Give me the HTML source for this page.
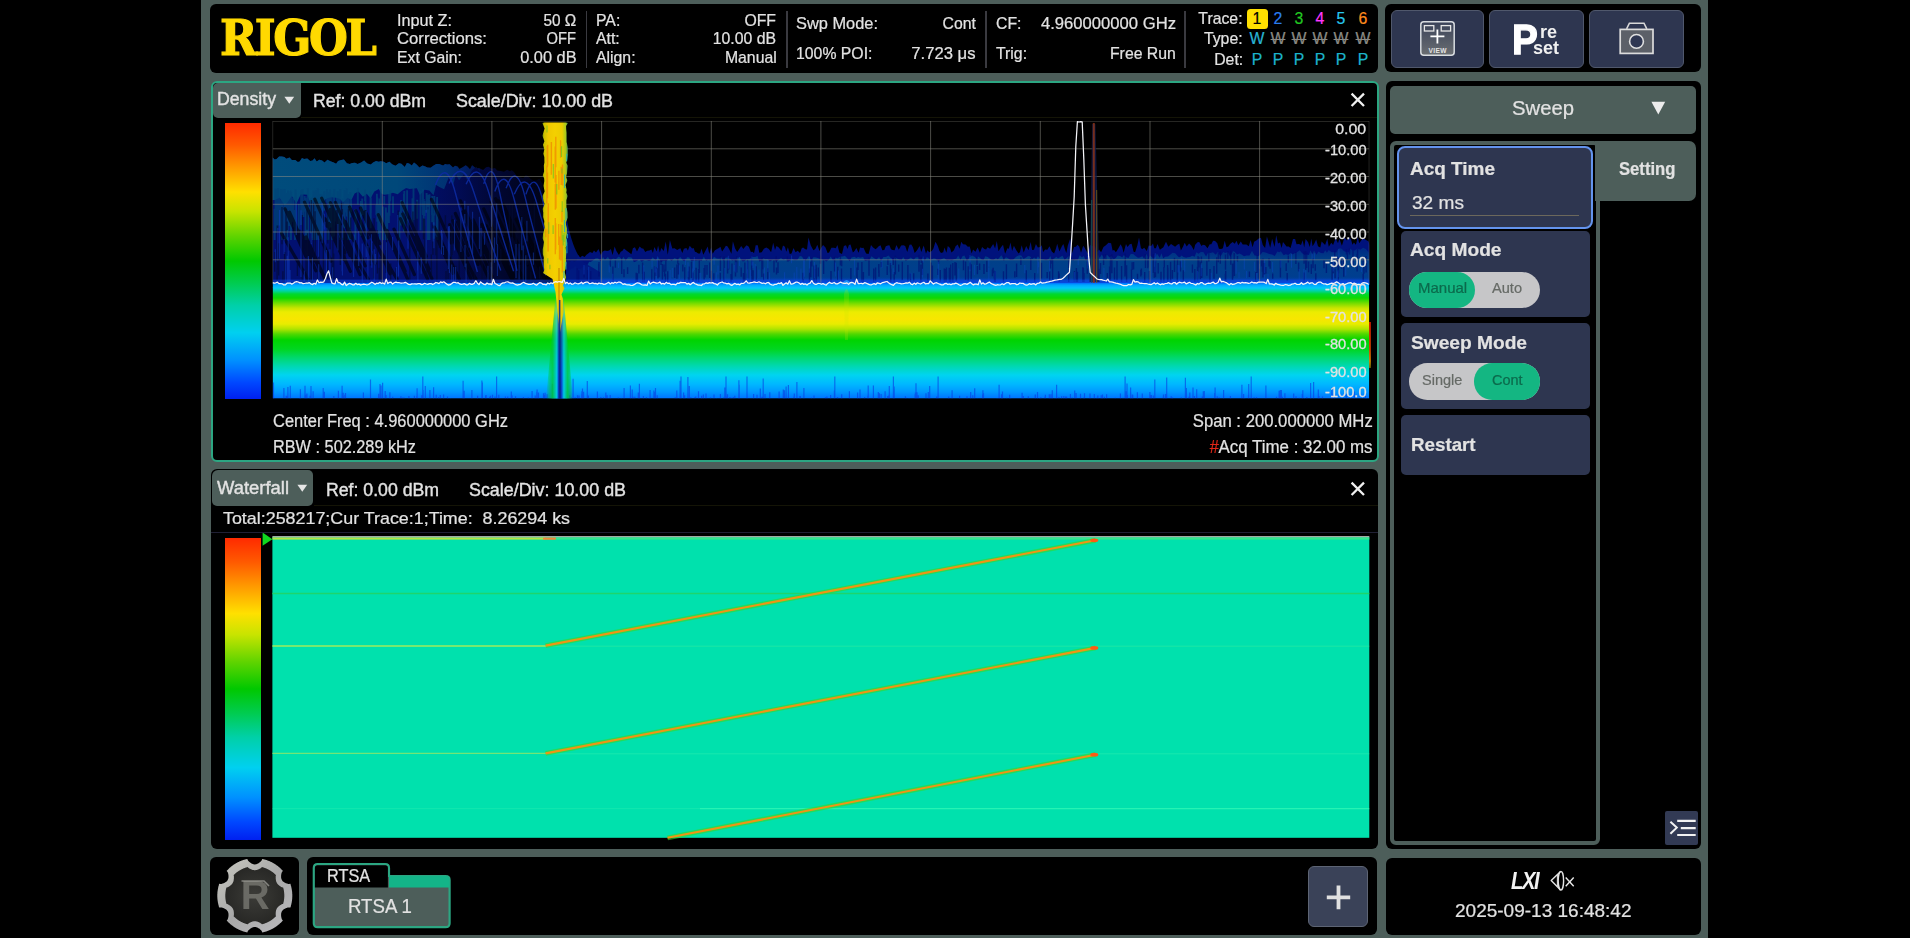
<!DOCTYPE html>
<html lang="en"><head><meta charset="utf-8"><title>RIGOL RTSA</title>
<style>
html,body{margin:0;padding:0;background:#000;}
body{width:1910px;height:938px;position:relative;overflow:hidden;font-family:'Liberation Sans', sans-serif;}
.abs{position:absolute;}
.pn{position:absolute;background:#000;border-radius:6px;}
.btn{position:absolute;background:#2e3650;border-radius:6px;}
svg{position:absolute;overflow:visible;}
#texts span{-webkit-text-stroke-width:0.22px;}
</style></head><body>
<div class="abs" style="left:200.6px;top:0;width:1507.7px;height:938px;background:#4d5e5a;"></div>
<div class="pn" style="left:210px;top:4px;width:1167.70px;height:68.50px;"></div>
<div class="pn" style="left:1385.3px;top:4px;width:315.70px;height:68.30px;"></div>
<div class="pn" style="left:210.6px;top:80.6px;width:1168.30px;height:381.40px;box-sizing:border-box;border:2.2px solid #2ca682;"></div>
<div class="pn" style="left:210.5px;top:469px;width:1167.20px;height:380.20px;"></div>
<div class="pn" style="left:1385.5px;top:80.7px;width:315.00px;height:768.50px;"></div>
<div class="pn" style="left:210px;top:857.2px;width:89.40px;height:77.80px;"></div>
<div class="pn" style="left:307px;top:857.4px;width:1070.40px;height:77.60px;"></div>
<div class="pn" style="left:1385.5px;top:857.6px;width:315.00px;height:77.40px;"></div>
<div class="abs" style="left:585.5px;top:10.5px;width:1.8px;height:57px;background:#3a3a40;"></div>
<div class="abs" style="left:785.8000000000001px;top:10.5px;width:1.8px;height:57px;background:#3a3a40;"></div>
<div class="abs" style="left:985.1px;top:10.5px;width:1.8px;height:57px;background:#3a3a40;"></div>
<div class="abs" style="left:1184.0px;top:10.5px;width:1.8px;height:57px;background:#3a3a40;"></div>
<div class="abs" style="left:1246.8px;top:8.6px;width:21px;height:20.2px;background:#ffe000;border-radius:3.5px;"></div>
<div class="abs" style="left:212.6px;top:82.6px;width:88.2px;height:35.2px;background:#4d5e5a;border-radius:5px 0 5px 5px;"></div>
<svg style="left:283px;top:95px" width="14" height="10" viewBox="0 0 14 10"><path d="M1.4 1.8 L11.2 1.8 L6.3 8.8 Z" fill="#e6e6e6"/></svg>
<svg style="left:1349px;top:91px" width="18" height="18" viewBox="0 0 18 18"><path d="M2.6 2.6 L15 15 M15 2.6 L2.6 15" stroke="#f0f0f0" stroke-width="2.3" fill="none"/></svg>
<div class="abs" style="left:224.6px;top:122.6px;width:36.4px;height:276.8px;background:linear-gradient(to bottom,#ff2a00 0%,#ff5a00 8%,#ff9a00 16%,#ffe000 25%,#c8e400 32%,#60d400 41%,#00c800 50%,#00cc50 58%,#00d0a8 66%,#00d0f0 76%,#0090ff 86%,#0048ff 94%,#0020f0 100%);"></div>
<svg style="left:0;top:0" width="1910" height="938" viewBox="0 0 1910 938">
<defs>
<linearGradient id="band" x1="0" y1="283" x2="0" y2="399" gradientUnits="userSpaceOnUse">
<stop offset="0.0000" stop-color="#0070ff"/>
<stop offset="0.0172" stop-color="#00a8ff"/>
<stop offset="0.0431" stop-color="#00c8f8"/>
<stop offset="0.0690" stop-color="#00d4a0"/>
<stop offset="0.0948" stop-color="#00d830"/>
<stop offset="0.1293" stop-color="#10d800"/>
<stop offset="0.1724" stop-color="#70dc00"/>
<stop offset="0.2155" stop-color="#c8e400"/>
<stop offset="0.2500" stop-color="#ecec00"/>
<stop offset="0.3103" stop-color="#f8e600"/>
<stop offset="0.3534" stop-color="#e8ec00"/>
<stop offset="0.3966" stop-color="#b0e400"/>
<stop offset="0.4397" stop-color="#50d800"/>
<stop offset="0.4914" stop-color="#00d400"/>
<stop offset="0.5690" stop-color="#00d620"/>
<stop offset="0.6379" stop-color="#00d868"/>
<stop offset="0.7155" stop-color="#00d8b0"/>
<stop offset="0.7931" stop-color="#00d4f0"/>
<stop offset="0.8707" stop-color="#00b8ff"/>
<stop offset="0.9397" stop-color="#0098ff"/>
<stop offset="1.0000" stop-color="#0070ff"/>
</linearGradient>
<linearGradient id="trough" x1="546" y1="0" x2="573" y2="0" gradientUnits="userSpaceOnUse">
<stop offset="0" stop-color="#00c800" stop-opacity="0"/>
<stop offset="0.25" stop-color="#00c840" stop-opacity="0.9"/>
<stop offset="0.40" stop-color="#00c8e8"/>
<stop offset="0.47" stop-color="#0838c8"/>
<stop offset="0.52" stop-color="#082090"/>
<stop offset="0.58" stop-color="#0848d0"/>
<stop offset="0.66" stop-color="#00c8e8"/>
<stop offset="0.80" stop-color="#00c840" stop-opacity="0.9"/>
<stop offset="1" stop-color="#00c800" stop-opacity="0"/>
</linearGradient>
<linearGradient id="troughm" x1="0" y1="292" x2="0" y2="399" gradientUnits="userSpaceOnUse">
<stop offset="0" stop-color="#fff" stop-opacity="0"/>
<stop offset="0.25" stop-color="#fff" stop-opacity="0.75"/>
<stop offset="1" stop-color="#fff" stop-opacity="1"/>
</linearGradient>
<mask id="tm"><path d="M556 292 L563 292 L573 399 L546 399 Z" fill="url(#troughm)"/></mask>
<linearGradient id="pk" x1="541" y1="0" x2="569" y2="0" gradientUnits="userSpaceOnUse">
<stop offset="0" stop-color="#40b020" stop-opacity="0.2"/>
<stop offset="0.1" stop-color="#c8c000"/>
<stop offset="0.25" stop-color="#f0c800"/>
<stop offset="0.5" stop-color="#f4d000"/>
<stop offset="0.75" stop-color="#eccc00"/>
<stop offset="0.9" stop-color="#a0c820"/>
<stop offset="1" stop-color="#20a0a0" stop-opacity="0.3"/>
</linearGradient>
<linearGradient id="hz" x1="0" y1="150" x2="0" y2="284" gradientUnits="userSpaceOnUse">
<stop offset="0" stop-color="#0b4a70"/>
<stop offset="0.33" stop-color="#0a3c74"/>
<stop offset="0.55" stop-color="#08237a"/>
<stop offset="0.9" stop-color="#081e8c"/>
<stop offset="1" stop-color="#0828c0"/>
</linearGradient>
<linearGradient id="hzr" x1="0" y1="250" x2="0" y2="284" gradientUnits="userSpaceOnUse">
<stop offset="0" stop-color="#002c84"/>
<stop offset="0.3" stop-color="#004088"/>
<stop offset="0.8" stop-color="#003e90"/>
<stop offset="1" stop-color="#0848e0"/>
</linearGradient>
<clipPath id="pc"><rect x="272.6" y="121" width="1096.7" height="277.6"/></clipPath>
</defs>
<g clip-path="url(#pc)">
<linearGradient id="hzx" x1="272" y1="0" x2="545" y2="0" gradientUnits="userSpaceOnUse">
<stop offset="0" stop-color="#021070"/><stop offset="0.5" stop-color="#021070"/><stop offset="0.68" stop-color="#020e6a" stop-opacity="0.8"/><stop offset="0.85" stop-color="#020c5c" stop-opacity="0.5"/><stop offset="1" stop-color="#020a50" stop-opacity="0.3"/></linearGradient>
<linearGradient id="tealx" x1="272" y1="0" x2="480" y2="0" gradientUnits="userSpaceOnUse">
<stop offset="0" stop-color="#004c7c"/><stop offset="0.6" stop-color="#00487a"/><stop offset="0.85" stop-color="#003a78" stop-opacity="0.8"/><stop offset="1" stop-color="#002a74" stop-opacity="0.3"/></linearGradient>
<path d="M272.6 285 L272.6 157.6 L274.7 159.4 L276.6 158.9 L279.1 156.6 L281.8 156.6 L284.4 156.9 L286.3 158.8 L289.6 157.4 L291.8 160.0 L295.3 159.9 L297.8 162.0 L299.7 161.5 L302.0 158.1 L304.0 159.0 L307.3 158.5 L310.2 160.9 L312.6 160.6 L314.5 158.2 L316.7 161.4 L319.3 159.7 L322.1 160.6 L324.5 162.4 L327.5 159.8 L330.4 161.3 L333.7 162.5 L336.1 163.8 L338.1 161.1 L341.2 159.9 L343.9 159.5 L346.9 163.3 L349.8 163.9 L352.1 163.1 L355.0 162.7 L357.6 164.1 L361.1 162.5 L364.1 160.5 L367.2 163.6 L370.8 164.6 L373.1 162.6 L376.1 160.9 L378.7 161.7 L380.7 161.3 L383.9 161.8 L386.1 163.2 L389.5 161.8 L392.1 164.3 L395.5 165.8 L398.9 163.2 L401.4 163.7 L404.8 166.9 L406.9 163.1 L409.1 163.5 L411.8 165.4 L414.0 162.6 L416.6 164.5 L419.4 167.5 L422.5 165.5 L425.4 166.4 L427.3 167.6 L430.5 167.7 L433.7 165.4 L436.2 164.1 L439.2 164.0 L441.1 164.8 L443.2 165.6 L445.1 164.0 L447.1 164.6 L449.6 164.3 L453.0 167.4 L455.0 165.7 L457.5 166.4 L459.5 168.9 L463.1 167.1 L465.7 165.3 L467.7 166.7 L470.0 169.3 L472.1 165.3 L475.6 168.0 L477.7 168.2 L479.5 168.2 L483.1 170.0 L486.1 167.2 L488.6 166.8 L491.8 168.8 L495.0 167.9 L497.2 170.4 L500.8 171.0 L504.0 171.8 L507.1 169.8 L509.9 171.2 L511.7 170.2 L514.0 172.0 L517.1 176.4 L519.7 177.1 L523.3 178.3 L525.7 175.3 L527.9 175.9 L530.1 178.6 L533.5 180.8 L536.2 180.6 L539.4 178.7 L542.4 183.8 L545 285 Z" fill="url(#hzx)"/>
<path d="M272.6 157.6 L274.7 159.4 L276.6 158.9 L279.1 156.6 L281.8 156.6 L284.4 156.9 L286.3 158.8 L289.6 157.4 L291.8 160.0 L295.3 159.9 L297.8 162.0 L299.7 161.5 L302.0 158.1 L304.0 159.0 L307.3 158.5 L310.2 160.9 L312.6 160.6 L314.5 158.2 L316.7 161.4 L319.3 159.7 L322.1 160.6 L324.5 162.4 L327.5 159.8 L330.4 161.3 L333.7 162.5 L336.1 163.8 L338.1 161.1 L341.2 159.9 L343.9 159.5 L346.9 163.3 L349.8 163.9 L352.1 163.1 L355.0 162.7 L357.6 164.1 L361.1 162.5 L364.1 160.5 L367.2 163.6 L370.8 164.6 L373.1 162.6 L376.1 160.9 L378.7 161.7 L380.7 161.3 L383.9 161.8 L386.1 163.2 L389.5 161.8 L392.1 164.3 L395.5 165.8 L398.9 163.2 L401.4 163.7 L404.8 166.9 L406.9 163.1 L409.1 163.5 L411.8 165.4 L414.0 162.6 L416.6 164.5 L419.4 167.5 L422.5 165.5 L425.4 166.4 L427.3 167.6 L430.5 167.7 L433.7 165.4 L436.2 164.1 L439.2 164.0 L441.1 164.8 L443.2 165.6 L445.1 164.0 L447.1 164.6 L449.6 164.3 L453.0 167.4 L455.0 165.7 L457.5 166.4 L459.5 168.9 L463.1 167.1 L465.7 165.3 L467.7 166.7 L470.0 169.3 L472.1 165.3 L475.6 168.0 L477.7 168.2 L479.5 168.2 L480.0 172.1 L476.3 166.7 L471.8 170.4 L467.3 179.9 L463.8 174.4 L459.0 180.3 L456.0 174.3 L453.2 184.8 L448.7 177.5 L444.1 189.3 L439.9 187.2 L436.1 185.0 L433.5 195.3 L429.4 190.4 L424.6 189.7 L419.9 194.9 L416.9 188.3 L413.6 188.5 L409.7 189.1 L406.1 188.0 L401.4 191.1 L397.7 194.2 L392.9 192.8 L388.2 194.2 L384.3 194.8 L381.8 194.1 L378.8 189.1 L374.3 191.4 L370.6 198.3 L366.7 193.7 L362.9 196.7 L358.5 191.6 L354.6 193.5 L351.4 200.0 L347.6 197.7 L343.2 202.2 L339.6 198.8 L335.9 197.8 L331.6 197.3 L327.8 197.9 L322.9 200.8 L318.2 204.0 L315.1 199.6 L310.2 203.3 L307.4 194.8 L303.8 194.4 L300.7 194.6 L296.5 203.4 L291.8 196.1 L287.5 202.5 L284.6 205.3 L279.7 197.7 L274.8 200.1 L272.6 200 Z" fill="url(#tealx)"/>
<path d="M328.9 192.2V214.0M330.3 193.1V211.3M277.2 202.4V224.5M329.0 204.2V228.6M437.5 208.5V240.0M318.1 189.0V222.0M295.5 199.0V236.1M291.1 191.9V229.3M390.3 190.3V200.2M344.6 189.9V227.9M407.1 190.2V225.6M417.2 199.8V218.7M427.8 195.0V207.1M313.6 190.8V204.0M307.5 196.1V213.9M322.1 201.0V214.7M277.0 194.5V203.0M365.5 192.9V216.1M281.0 209.3V231.1M412.5 198.2V222.4M437.1 196.9V231.5M379.6 198.5V217.6M295.5 189.8V221.5M301.1 190.2V225.1M318.3 195.3V211.1M350.3 192.1V214.4M433.7 213.3V238.8M434.3 196.0V215.5M337.4 200.3V224.4M357.8 188.1V204.6M340.3 189.1V197.8M312.6 203.2V228.2M383.2 206.6V240.0M328.1 213.6V226.4M380.8 189.1V223.9M315.4 207.1V240.0M360.9 201.1V235.8M328.5 203.2V239.8M389.1 194.0V203.0M333.9 190.7V225.5M378.2 204.3V234.1M274.6 208.7V240.0M362.8 205.1V215.3M315.9 189.9V206.4M308.1 207.2V240.0M337.5 200.5V230.3M376.4 204.7V215.2M316.2 207.3V225.1M276.1 189.6V206.2M388.9 205.6V222.9M351.1 200.1V211.9M287.2 213.4V240.0M350.2 209.3V240.0M318.6 193.5V231.7M370.5 191.7V216.5M282.8 209.3V233.6M320.4 194.0V230.7M278.1 188.1V211.8M324.1 191.7V210.7M413.5 188.0V220.1M281.9 212.1V240.0M293.1 197.7V218.3M312.9 197.4V219.1M282.0 190.6V225.4M429.3 194.5V211.0M305.5 197.7V236.3M327.6 204.4V240.0M310.2 206.7V216.3M348.8 207.6V236.2M282.1 212.1V224.2M331.0 195.7V227.4M291.2 205.1V222.7M339.5 192.4V205.5M424.4 200.9V216.0M339.8 199.7V212.2M289.1 196.9V207.8M316.9 202.8V239.2M342.5 198.8V223.5M330.1 189.6V206.5M282.3 201.1V229.2M288.3 195.0V211.0M348.0 212.8V240.0M275.4 188.8V219.5M305.2 203.3V211.3M427.9 209.5V240.0M290.4 190.8V203.8M387.2 212.5V240.0M401.0 199.9V225.5M403.9 194.0V231.5M324.4 191.3V207.4M390.0 190.9V201.2M370.8 198.1V213.2M275.7 195.8V218.6M316.5 211.0V234.2M315.0 213.0V240.0M277.6 201.0V230.5M316.7 205.4V240.0M279.7 196.8V218.2M306.9 208.7V240.0M308.1 213.2V231.2M289.2 193.8V226.1M432.0 200.9V214.9M343.2 205.3V240.0M339.3 193.5V232.7M282.6 189.6V210.1M332.3 207.1V240.0M295.7 192.8V230.8M279.3 205.3V225.4M329.1 192.4V200.5M332.3 212.8V224.8M287.7 197.3V231.6M302.5 189.3V212.4M426.6 193.0V212.7M276.0 198.7V232.7M280.7 188.9V198.9M291.0 207.4V240.0M319.2 212.9V240.0M393.0 196.2V213.0M399.4 211.8V240.0M275.6 194.1V217.3M337.0 198.0V214.1M355.9 212.1V226.0M322.7 209.4V240.0M328.4 196.3V215.9M287.1 193.1V225.2M284.7 188.9V214.6M436.7 211.0V240.0M288.0 190.5V214.5M348.2 194.1V215.4M385.9 207.4V240.0M294.1 209.9V227.3M335.9 207.2V221.6M314.7 192.0V228.3M328.2 198.3V238.1M312.4 209.0V237.9M280.8 200.3V234.6M334.3 189.0V206.4M305.5 213.3V240.0M298.6 210.5V232.9M403.1 212.6V224.0M376.9 193.7V213.5M307.9 194.6V221.8M307.8 188.3V206.8M304.7 196.1V210.6M365.0 189.6V200.9M365.3 204.6V215.5M389.4 198.7V215.7M432.2 196.1V222.3M343.1 210.5V240.0M306.7 206.9V221.4M423.7 199.0V233.3M420.6 200.0V213.2M365.6 204.7V240.0M377.3 197.6V221.8M321.0 201.6V239.2M355.4 208.9V240.0M295.0 212.5V240.0M282.9 212.1V232.5M314.9 209.4V222.6M310.9 198.5V233.6M286.1 193.7V214.5M337.7 191.2V207.1M423.0 189.1V215.1M280.3 209.8V221.6M365.3 204.3V222.1M370.7 199.1V228.2M346.8 188.6V216.4M313.1 207.9V240.0M303.8 200.3V211.7M345.5 190.4V212.5M280.8 204.5V215.2M403.1 201.3V211.0M336.7 212.7V225.1M339.7 207.0V240.0M437.0 200.8V239.4M284.9 208.5V240.0M332.2 207.7V220.7M292.1 209.2V221.8M426.7 193.4V209.8M327.0 189.0V202.8M429.4 205.7V240.0M404.3 191.0V216.0M333.7 210.7V236.5M420.5 190.7V230.5M339.4 208.7V225.2M312.1 197.4V229.8M303.3 207.3V216.9M290.7 204.6V240.0M384.2 196.1V204.2M298.8 204.0V225.8M422.7 191.4V206.7M277.7 188.1V207.4M333.3 193.8V220.5M307.9 204.2V227.4M429.5 194.3V207.1M379.9 210.7V240.0M317.9 188.3V216.9M332.2 204.8V227.0M322.4 194.5V231.4M362.2 198.6V214.2" stroke="#004478" stroke-width="1.9" opacity="0.75" fill="none"/>
<path d="M294.3 230.7L305.8 256.3M415.0 237.5L429.1 268.9M328.9 223.5L350.4 271.4M437.2 232.2L452.0 265.0M355.8 210.6L368.0 237.8M497.9 230.9L523.6 279.0M281.6 233.5L307.9 279.0M394.0 229.2L414.4 274.5M335.4 202.4L351.3 237.9M289.5 212.1L315.9 270.8M450.3 233.5L476.0 279.0M345.2 221.3L365.2 265.9M473.2 220.0L489.8 256.9M437.3 238.5L452.9 273.3M495.6 198.6L512.1 235.4M337.8 229.2L368.2 279.0M462.8 211.7L491.9 276.3M360.5 208.0L390.1 273.9M434.5 227.1L459.2 279.0M519.9 217.7L548.1 279.0M450.9 234.0L471.0 278.7M457.5 222.0L475.0 260.8M331.9 224.2L344.8 252.7M503.1 204.1L514.9 230.3M306.1 237.0L324.4 277.5M314.8 199.2L326.8 226.1M449.7 224.6L475.1 279.0M460.5 200.8L483.7 252.3M369.0 232.3L396.9 279.0M498.4 200.8L527.2 264.8M504.0 237.7L517.4 267.5M330.4 202.7L342.3 229.3M487.7 232.1L511.8 279.0M482.1 224.5L499.2 262.5M304.5 202.1L331.1 261.2M330.2 211.4L350.1 255.5M285.1 208.8L302.1 246.5M455.4 213.5L473.1 252.9M516.2 219.2L544.7 279.0M431.5 199.3L451.1 242.9M386.9 230.5L405.2 271.1M452.6 220.6L468.3 255.3M491.2 201.8L519.1 263.7M321.7 198.1L337.1 232.1M466.7 239.1L478.1 264.3M400.3 218.6L427.6 279.0M325.2 218.8L343.5 259.4M483.8 208.9L514.2 276.4M349.5 207.0L374.9 263.5M402.1 202.6L426.2 256.3M299.8 231.1L325.2 279.0M472.8 224.4L491.2 265.4M378.3 214.6L407.6 279.0M301.1 235.3L312.9 261.4M330.5 209.1L360.0 274.6M402.8 213.9L431.9 278.7M337.2 217.4L359.2 266.3M464.8 229.6L489.2 279.0M365.4 211.7L379.8 243.7M486.6 225.8L512.8 279.0" stroke="#000208" stroke-width="3.2" opacity="0.6" fill="none" stroke-linecap="round"/>
<path d="M319.1 231.6V272.1M307.5 233.3V278.4M315.1 211.2V229.6M412.9 211.6V233.4M302.4 214.9V239.2M380.1 257.0V283.0M381.7 253.3V283.0M426.7 253.9V279.6M500.8 248.9V283.0M357.3 245.2V257.3M482.1 251.3V283.0M386.7 232.8V266.9M524.2 237.4V249.6M306.6 270.9V283.0M347.0 228.8V237.3M385.9 250.3V273.1M333.7 253.4V283.0M332.2 257.7V282.2M398.5 221.2V252.2M495.8 225.5V269.3M374.1 218.3V244.2M274.7 252.0V271.8M311.3 259.9V283.0M277.1 268.5V283.0M390.7 263.6V283.0M336.3 210.0V238.7M398.2 210.4V239.0M373.7 230.2V278.5M409.8 234.9V280.6M330.1 231.3V257.1M493.9 221.1V263.9M448.1 257.0V278.9M284.7 252.0V283.0M287.2 221.6V229.9M459.2 242.9V279.5M451.4 233.0V273.0M423.5 218.6V239.3M288.5 240.9V250.5M489.5 241.4V283.0M534.9 234.2V259.6M445.4 215.3V229.7M297.4 262.6V276.0M465.3 217.4V256.3M318.2 262.0V283.0M525.3 256.5V283.0M488.8 220.4V228.5M456.1 265.8V283.0M509.4 237.6V265.6M370.5 240.6V265.5M313.6 203.2V253.1M302.2 245.6V283.0M432.9 224.8V254.7M282.9 271.3V283.0M424.9 218.8V259.6M341.6 202.7V219.2M395.9 268.2V283.0M452.1 228.3V255.1M530.9 271.4V283.0M446.0 271.0V281.3M474.8 267.6V283.0M431.3 254.6V267.0M342.4 208.9V237.2M337.4 210.3V246.8M498.0 245.2V272.2M492.9 234.4V268.8M333.0 204.1V242.1M312.5 262.7V281.9M315.4 219.5V262.8M451.8 215.2V243.3M539.5 266.6V278.7M512.4 204.1V242.7M534.3 201.2V243.0M311.3 200.1V243.1M323.4 231.3V277.6M463.3 214.2V225.5M435.9 235.7V255.2M436.9 251.0V283.0M327.8 204.7V243.5M466.0 204.0V246.0M497.9 262.2V283.0M516.1 234.3V278.9M323.5 259.9V283.0M372.7 242.8V251.0M527.8 235.6V265.2M416.9 201.5V250.1M282.0 206.9V244.3M278.7 243.2V275.4M286.0 208.9V237.6M348.4 208.8V233.8M431.4 262.0V276.2M377.4 230.3V273.5M379.2 267.8V283.0M340.3 230.4V265.0M415.2 205.0V231.2M509.3 202.5V237.4M439.3 218.0V247.9M306.0 242.8V283.0M345.4 233.6V264.0M307.0 209.5V229.8M350.7 217.5V229.2M327.5 251.1V278.5M437.0 233.8V254.8M332.9 236.9V261.0M277.2 225.4V269.6" stroke="#030a30" stroke-width="1.3" opacity="0.65" fill="none"/>
<path d="M325.0 221.7V259.2M533.4 252.5V264.7M301.0 227.7V277.0M469.1 231.3V247.6M442.2 233.4V247.3M466.1 263.4V283.0M453.6 267.0V282.7M481.0 228.0V256.6M284.1 239.1V253.9M417.9 251.6V281.2M494.5 237.6V262.8M329.9 249.3V273.8M308.4 255.9V283.0M398.8 240.5V258.0M367.9 246.0V283.0M354.3 234.5V260.5M449.4 226.1V273.1M289.2 259.6V283.0M301.0 210.3V228.1M366.2 211.0V257.0M318.7 264.2V283.0M451.8 264.4V283.0M326.5 249.9V280.2M417.5 262.1V270.4M398.5 240.5V276.4M443.5 245.8V255.0M455.6 267.1V283.0M465.0 245.0V267.2M371.4 234.2V264.2M408.0 219.6V248.8M353.6 242.2V276.9M519.1 243.8V279.5M516.0 244.0V277.9M322.2 202.7V243.2M448.4 226.6V269.1M358.7 231.0V266.0M277.8 227.9V260.7M275.3 249.2V262.3M287.3 255.7V283.0M468.1 206.1V240.5M396.5 267.1V283.0M464.8 200.8V209.4M491.4 205.7V226.8M371.8 241.4V267.8M312.5 257.4V280.7M441.5 230.1V254.3M290.1 270.1V283.0M362.3 243.6V283.0M433.9 222.2V248.2M374.2 249.3V282.6M386.4 242.2V283.0M285.3 260.0V283.0M426.1 219.7V263.5M421.3 257.4V273.8M521.8 216.9V250.3M397.8 214.9V233.6M484.6 233.1V244.8M479.4 216.8V249.1M324.3 213.8V229.4M525.8 255.2V283.0M296.3 203.7V235.1M433.1 228.6V241.6M342.4 240.6V275.5M342.1 225.3V271.3M496.7 203.4V244.4M464.8 214.0V223.6M332.7 267.2V283.0M311.2 232.2V244.3M318.6 235.4V256.7M304.4 270.5V280.8M342.6 214.5V237.8M426.0 209.9V225.5M392.6 237.1V250.2M491.2 262.3V283.0M375.4 254.1V264.7M322.5 207.4V225.9M460.9 207.4V251.9M472.6 211.8V254.5M337.9 224.1V250.4M488.0 265.7V283.0M288.2 237.3V283.0M279.5 210.0V258.8M523.2 245.6V283.0M454.5 219.7V250.5M526.9 220.7V241.5M497.4 243.9V275.9" stroke="#1040c8" stroke-width="1.1" opacity="0.5" fill="none"/>
<path d="M435.5 185.0 Q446.0 157.0 455.4 193.0 T477.4 272.0 M449.1 183.5 Q462.0 155.5 473.6 191.5 T500.8 270.5 M466.1 184.3 Q478.0 156.3 488.7 192.3 T513.6 271.3 M483.7 183.9 Q492.0 155.9 499.5 191.9 T517.0 270.9 M494.8 191.5 Q505.0 163.5 514.2 199.5 T535.6 278.5 M506.1 188.3 Q516.0 160.3 524.9 196.3 T545.8 275.3 M514.3 194.3 Q526.0 166.3 536.5 202.3 T561.0 281.3 M525.9 194.4 Q535.0 166.4 543.2 202.4 T562.4 281.4" stroke="#0c2aa0" stroke-width="1.4" fill="none" opacity="0.9"/>
<path d="M566 285 L566.0 267.1 L567.5 260.3 L569.7 262.3 L572.0 260.5 L574.3 262.1 L576.6 260.8 L578.1 255.0 L580.2 257.4 L582.2 255.8 L584.6 256.9 L586.5 254.7 L588.2 253.4 L590.0 252.1 L592.4 253.0 L594.0 250.5 L596.0 252.5 L598.5 249.0 L600.9 255.1 L602.7 251.4 L604.8 250.5 L607.1 250.9 L609.1 250.6 L610.9 249.0 L612.6 254.9 L614.6 246.4 L616.4 251.0 L618.9 255.1 L620.7 251.7 L622.5 250.7 L624.0 248.6 L626.4 250.5 L628.8 252.3 L631.4 254.3 L632.9 248.3 L634.9 247.2 L637.0 251.4 L639.6 246.6 L641.9 248.4 L643.2 248.4 L645.3 252.0 L647.2 250.8 L649.4 250.6 L651.4 249.4 L652.9 252.9 L654.4 247.0 L656.7 251.4 L658.1 245.4 L659.8 252.4 L661.3 247.9 L663.8 251.1 L665.7 241.6 L667.8 254.8 L669.9 240.1 L672.3 248.4 L674.6 248.2 L677.2 250.1 L678.8 249.1 L680.4 248.3 L682.3 253.1 L683.9 248.7 L686.4 248.1 L687.9 250.5 L689.7 245.8 L692.1 248.6 L693.6 248.0 L695.0 251.8 L696.5 252.2 L698.1 253.5 L700.0 253.5 L701.5 248.6 L703.3 254.7 L705.8 250.1 L707.7 246.4 L709.3 254.1 L711.1 247.5 L712.7 253.8 L714.7 250.5 L717.0 248.9 L719.0 248.1 L720.4 246.8 L722.1 251.6 L724.2 248.6 L725.9 245.7 L727.4 246.3 L729.1 249.0 L731.4 253.8 L732.9 241.3 L735.1 248.5 L737.2 251.9 L739.6 248.5 L741.2 246.1 L743.4 248.9 L744.9 246.9 L746.7 245.3 L748.8 246.7 L750.9 252.1 L752.7 251.7 L754.0 253.2 L755.7 245.3 L757.8 245.3 L759.3 252.8 L761.7 252.3 L763.9 248.8 L766.3 247.6 L768.9 249.1 L771.1 252.2 L773.2 242.8 L775.0 249.9 L776.5 245.9 L778.8 247.4 L781.4 251.1 L783.0 245.4 L784.9 246.8 L786.3 251.8 L787.9 247.2 L789.8 254.1 L791.5 253.6 L793.5 248.1 L795.6 252.3 L797.7 250.7 L800.0 253.0 L801.7 248.3 L803.1 247.5 L805.3 249.2 L807.0 249.4 L808.5 237.4 L810.8 245.5 L813.4 250.3 L815.3 249.0 L817.3 244.7 L819.5 250.9 L821.6 247.1 L823.1 244.9 L825.5 247.6 L827.6 253.0 L829.1 252.4 L831.4 247.8 L833.8 247.8 L835.8 248.2 L837.4 245.0 L839.5 252.7 L842.0 254.0 L843.9 246.1 L846.0 245.3 L847.5 248.9 L848.9 244.9 L850.5 244.5 L852.9 252.4 L854.5 251.1 L856.4 247.9 L858.6 252.7 L860.1 247.4 L862.1 247.9 L863.5 247.7 L866.1 253.5 L868.6 254.0 L871.0 245.0 L873.1 247.4 L875.6 249.2 L877.3 247.8 L878.7 246.3 L880.5 245.2 L882.3 250.2 L884.3 250.0 L885.8 246.2 L887.8 245.5 L889.4 245.3 L891.0 249.2 L892.6 250.1 L894.6 250.2 L896.4 245.0 L898.8 249.8 L901.1 245.4 L903.4 245.3 L905.2 246.0 L907.2 252.0 L909.5 244.8 L911.3 244.4 L912.9 247.2 L914.7 253.1 L917.2 249.9 L919.6 245.9 L921.3 251.9 L923.7 245.4 L926.0 253.7 L927.3 250.2 L929.3 252.2 L931.8 250.9 L933.4 248.6 L935.5 241.7 L937.8 246.0 L939.5 251.0 L941.0 252.9 L943.2 252.2 L944.5 247.5 L946.4 252.8 L947.8 245.9 L950.0 248.0 L951.5 252.5 L953.9 250.2 L955.6 246.2 L957.7 244.5 L959.5 248.7 L961.3 241.7 L963.0 244.3 L965.6 244.5 L967.8 246.8 L969.7 246.6 L971.7 253.6 L973.0 249.6 L975.5 251.7 L977.6 247.6 L979.9 252.7 L982.1 247.0 L984.4 249.1 L986.1 249.5 L987.5 247.3 L990.1 248.8 L991.7 246.3 L993.2 244.0 L995.1 248.4 L996.8 241.1 L998.5 251.2 L1001.0 247.3 L1003.0 244.7 L1005.1 253.8 L1007.4 248.2 L1008.8 248.7 L1010.5 242.6 L1012.1 250.9 L1013.9 245.8 L1016.3 250.3 L1018.6 253.5 L1020.0 251.9 L1021.7 245.2 L1023.7 252.6 L1026.2 245.9 L1028.5 250.3 L1030.7 242.1 L1032.1 250.0 L1034.0 249.7 L1035.9 243.9 L1037.9 247.6 L1040.2 247.0 L1041.7 245.2 L1043.1 251.9 L1045.1 249.6 L1047.3 249.7 L1049.5 246.3 L1051.8 251.5 L1054.1 253.5 L1055.8 248.9 L1057.2 243.8 L1059.4 251.4 L1062.0 245.9 L1063.4 243.9 L1064.8 248.7 L1066.3 253.0 L1067.8 245.4 L1070.3 238.3 L1071.9 253.4 L1074.0 247.0 L1075.9 246.8 L1077.4 244.7 L1079.2 246.4 L1081.0 252.8 L1083.2 245.8 L1084.8 247.9 L1086.4 251.1 L1088.1 253.5 L1090.1 245.1 L1092.5 246.2 L1094.9 246.3 L1096.8 252.4 L1099.0 249.5 L1101.1 252.3 L1103.5 247.0 L1105.9 245.2 L1108.5 242.7 L1111.1 243.3 L1112.6 250.5 L1114.1 250.0 L1115.9 252.3 L1118.3 248.6 L1120.6 244.3 L1122.2 247.2 L1123.6 252.8 L1126.0 244.0 L1127.5 247.1 L1129.7 244.2 L1131.6 243.8 L1133.6 251.8 L1135.1 252.3 L1137.4 245.3 L1139.0 237.6 L1140.9 248.0 L1142.2 249.3 L1144.2 247.8 L1146.8 251.0 L1148.6 245.4 L1151.1 246.0 L1153.0 243.6 L1154.3 248.2 L1155.9 248.2 L1157.5 244.0 L1159.9 249.8 L1161.3 248.8 L1163.4 247.3 L1166.0 241.8 L1168.4 246.8 L1171.0 244.0 L1173.3 245.4 L1175.1 246.8 L1177.3 244.7 L1179.3 243.7 L1180.9 250.5 L1183.1 246.6 L1184.7 242.7 L1186.7 246.5 L1189.1 243.6 L1191.4 245.7 L1193.8 250.0 L1195.2 244.8 L1197.5 242.2 L1199.2 241.9 L1201.5 246.1 L1202.9 244.8 L1205.1 245.3 L1207.5 248.3 L1209.7 244.3 L1211.3 244.3 L1213.1 240.7 L1215.1 241.1 L1217.3 243.2 L1218.9 248.7 L1221.1 248.9 L1222.9 248.2 L1224.7 240.7 L1226.5 247.3 L1228.3 246.6 L1230.1 244.0 L1232.6 242.0 L1234.8 243.7 L1236.5 240.7 L1238.3 245.2 L1240.8 241.4 L1242.7 244.4 L1244.5 244.5 L1246.4 244.6 L1248.8 246.3 L1250.6 240.0 L1252.6 247.2 L1254.1 241.7 L1256.4 240.4 L1258.7 238.6 L1260.9 237.7 L1262.8 245.1 L1265.1 247.9 L1266.9 236.4 L1268.5 241.7 L1270.2 247.7 L1272.1 238.7 L1274.6 247.0 L1276.2 235.3 L1278.0 243.5 L1280.0 242.5 L1281.6 248.0 L1283.0 241.9 L1284.8 244.3 L1286.5 246.6 L1288.7 246.6 L1290.6 247.9 L1293.0 239.1 L1295.1 238.9 L1296.5 244.3 L1299.0 243.9 L1301.0 245.0 L1302.7 240.3 L1304.2 247.4 L1305.6 239.1 L1308.1 242.2 L1309.8 247.1 L1311.3 238.6 L1312.6 246.3 L1314.2 243.7 L1316.2 239.4 L1318.0 246.2 L1320.3 247.6 L1321.6 241.5 L1323.2 243.1 L1325.1 244.9 L1327.3 238.7 L1328.8 246.8 L1331.3 242.7 L1333.1 244.9 L1335.6 238.3 L1338.0 243.3 L1339.4 238.7 L1341.9 245.7 L1344.4 237.5 L1346.9 240.5 L1349.1 237.5 L1351.0 239.4 L1352.5 244.8 L1353.9 242.5 L1355.9 244.7 L1357.8 237.1 L1359.2 243.2 L1361.3 240.2 L1363.4 238.3 L1366.0 239.9 L1368.4 241.3 L1369.8 245.3 L1371 285 Z" fill="#00127c"/>
<path d="M566 285 L566.0 271.7 L567.7 270.7 L569.4 270.5 L571.7 268.7 L573.5 268.2 L575.3 265.9 L577.1 269.7 L579.4 269.0 L580.9 268.8 L583.2 267.1 L585.5 265.6 L587.4 265.3 L589.1 261.8 L590.6 262.0 L592.9 260.6 L595.7 258.3 L598.1 258.3 L600.5 261.2 L603.1 256.9 L604.9 260.1 L607.9 256.7 L610.3 260.6 L613.1 258.5 L615.8 259.2 L618.7 256.5 L621.6 258.9 L623.7 256.9 L625.5 260.8 L628.1 257.3 L630.1 257.2 L631.9 257.7 L633.9 262.2 L636.9 261.1 L639.1 259.3 L641.8 261.8 L644.4 260.1 L646.2 260.1 L649.0 261.0 L650.6 260.6 L652.6 257.3 L655.6 260.3 L658.2 257.1 L660.9 261.9 L663.8 260.7 L666.5 261.0 L668.9 258.8 L671.7 260.9 L674.5 258.0 L677.4 259.4 L680.3 256.9 L683.3 260.9 L685.2 261.2 L687.0 257.3 L689.2 257.6 L691.4 261.6 L694.0 260.4 L696.0 260.8 L698.7 260.2 L701.6 261.0 L703.8 256.6 L706.2 261.1 L708.2 259.6 L711.0 260.8 L712.5 259.0 L714.0 256.7 L716.7 258.5 L719.2 258.8 L721.2 257.3 L723.2 261.1 L725.6 257.8 L727.2 257.6 L729.8 258.6 L732.3 260.8 L734.0 260.1 L735.5 260.9 L737.3 257.6 L740.2 258.1 L742.1 261.3 L744.5 261.3 L746.6 258.9 L749.5 258.9 L752.5 257.0 L755.3 256.9 L757.5 255.9 L759.3 261.5 L761.5 260.7 L763.4 258.0 L765.0 259.2 L767.8 258.9 L769.9 261.4 L772.7 259.8 L774.3 259.5 L776.5 261.5 L778.5 259.8 L781.0 258.0 L783.3 259.8 L786.1 258.7 L788.2 261.6 L789.8 260.7 L792.3 259.1 L794.5 260.2 L797.3 260.1 L799.9 255.9 L801.9 256.5 L804.8 261.0 L806.6 259.2 L808.9 255.9 L811.0 260.1 L813.5 257.3 L816.1 257.4 L818.4 258.2 L821.4 259.5 L824.1 259.7 L826.2 261.4 L828.7 259.7 L830.7 256.5 L833.0 260.5 L835.7 257.6 L837.4 258.6 L840.2 256.5 L842.8 256.6 L844.8 255.8 L846.8 257.8 L849.7 261.3 L851.5 257.4 L854.4 256.7 L856.4 258.1 L858.0 257.0 L860.1 257.8 L863.1 257.0 L864.9 260.9 L867.1 260.5 L869.5 260.1 L871.5 256.3 L874.1 258.2 L876.5 259.4 L879.1 257.0 L881.1 260.9 L883.4 257.1 L885.9 256.9 L888.5 255.6 L891.3 258.7 L893.3 261.0 L895.2 256.8 L896.8 258.6 L899.4 259.4 L901.6 260.1 L903.2 257.1 L905.7 261.1 L908.1 259.4 L910.8 257.6 L913.7 259.7 L915.7 257.6 L918.4 257.3 L920.2 260.4 L922.5 258.3 L925.0 260.6 L926.7 257.2 L928.3 257.7 L930.6 260.3 L933.1 258.6 L935.2 258.6 L937.1 260.2 L939.8 260.2 L941.5 259.2 L944.1 258.1 L947.0 260.5 L949.6 260.0 L952.1 260.4 L953.8 259.3 L956.3 258.7 L958.2 255.5 L960.6 260.0 L962.5 256.3 L964.4 255.6 L966.9 260.9 L969.6 257.2 L972.1 255.4 L974.9 257.0 L976.4 258.8 L978.1 256.6 L979.7 257.7 L982.0 259.8 L983.6 259.9 L985.3 256.3 L987.7 257.0 L989.7 258.4 L991.5 259.7 L993.3 260.0 L996.1 258.1 L997.6 259.6 L999.1 257.9 L1001.3 255.3 L1003.7 259.2 L1006.1 257.3 L1008.4 258.4 L1010.2 260.1 L1013.2 259.7 L1016.1 256.8 L1019.1 255.3 L1021.3 255.6 L1023.5 258.9 L1026.1 257.5 L1028.1 255.9 L1030.2 256.5 L1032.0 259.2 L1034.3 257.4 L1036.1 259.0 L1037.9 256.3 L1040.2 258.9 L1043.2 259.2 L1046.1 260.2 L1048.7 259.0 L1050.3 255.9 L1051.8 259.9 L1054.4 258.5 L1056.3 256.8 L1058.0 258.5 L1061.0 256.5 L1062.6 255.7 L1064.6 260.0 L1067.3 257.4 L1069.0 255.3 L1070.7 259.3 L1072.9 260.6 L1075.8 259.4 L1078.0 259.5 L1079.7 255.2 L1082.0 257.6 L1083.8 256.1 L1085.4 260.0 L1087.9 260.2 L1090.9 257.2 L1093.5 256.8 L1096.2 259.6 L1097.9 254.6 L1099.7 258.0 L1101.8 254.5 L1104.5 259.1 L1106.7 254.6 L1109.6 257.5 L1111.2 256.1 L1113.6 259.5 L1115.8 257.9 L1117.7 255.5 L1120.5 256.3 L1122.2 257.5 L1123.9 255.1 L1126.0 257.3 L1128.5 258.0 L1130.7 254.1 L1133.2 254.0 L1135.4 256.0 L1138.0 257.8 L1139.8 257.4 L1142.4 256.2 L1144.1 258.8 L1146.5 253.7 L1148.3 259.2 L1150.2 255.5 L1152.8 258.1 L1155.3 257.5 L1156.9 253.6 L1159.8 257.8 L1161.4 253.2 L1163.2 258.4 L1165.1 256.8 L1168.0 256.6 L1170.8 254.2 L1172.6 252.7 L1175.2 253.2 L1178.2 256.7 L1179.9 257.3 L1181.7 255.4 L1183.4 257.1 L1186.2 257.8 L1187.7 257.3 L1190.0 257.1 L1192.3 255.8 L1194.7 256.8 L1196.3 252.3 L1198.6 253.7 L1200.7 251.9 L1203.3 252.0 L1206.1 256.6 L1208.2 252.4 L1210.7 252.9 L1212.9 252.2 L1215.8 254.8 L1217.9 252.0 L1220.5 256.5 L1223.2 251.9 L1225.3 253.1 L1227.9 252.1 L1230.3 257.0 L1233.0 251.1 L1234.6 251.7 L1237.1 254.5 L1239.4 253.6 L1241.5 254.5 L1244.0 256.3 L1246.6 255.5 L1249.5 255.6 L1252.0 250.7 L1254.6 255.6 L1256.7 255.7 L1258.5 256.0 L1260.6 254.6 L1262.5 252.1 L1264.5 252.2 L1266.2 252.8 L1269.2 254.0 L1272.1 254.6 L1274.8 255.9 L1277.4 251.5 L1279.3 252.3 L1280.8 251.2 L1283.7 255.2 L1285.7 254.3 L1288.3 254.9 L1291.0 252.7 L1292.7 254.4 L1294.7 253.2 L1296.7 252.6 L1299.7 250.3 L1301.9 253.1 L1304.3 254.8 L1306.4 254.6 L1308.9 254.9 L1310.5 250.3 L1312.5 254.4 L1314.0 250.5 L1316.6 254.8 L1318.3 251.4 L1320.9 252.9 L1323.5 253.2 L1325.3 250.2 L1326.9 252.7 L1328.7 250.1 L1331.6 252.3 L1334.0 252.3 L1336.4 252.5 L1338.4 248.7 L1340.0 248.3 L1342.0 249.1 L1343.7 251.1 L1346.7 252.2 L1348.6 252.6 L1350.3 248.6 L1352.3 250.4 L1354.8 250.5 L1357.4 248.4 L1360.3 249.8 L1363.1 247.8 L1365.8 248.9 L1368.6 252.3 L1371 285 Z" fill="url(#hzr)"/>
<path d="M566 215 Q572 250 583 262 L600 272 L600 285 L566 285 Z" fill="#00167e" opacity="0.9"/>
<path d="M696.1 267.7V281.5M875.6 267.4V280.9M621.7 256.2V274.0M1338.5 257.3V273.2M1198.8 257.1V267.6M659.0 260.3V277.2M873.9 269.5V277.9M744.8 262.6V273.0M946.5 271.5V277.2M1237.5 256.0V261.4M662.4 264.1V279.8M664.0 264.5V272.1M921.3 257.0V263.0M944.4 272.8V282.0M937.8 268.8V274.9M823.6 259.0V273.9M665.5 273.7V282.0M578.7 270.3V282.0M945.3 269.0V282.0M968.2 266.3V281.1M863.4 272.1V279.9M1047.2 272.1V278.3M598.7 264.0V271.1M1167.6 264.9V282.0M1111.9 253.9V273.2M950.7 264.5V282.0M731.1 274.0V282.0M1337.0 256.3V267.4M1103.6 254.4V265.0M1230.8 250.6V264.7M932.4 265.5V281.2M761.9 257.6V277.0M615.4 260.2V267.7M931.0 262.6V280.9M895.4 255.8V274.5M1214.0 266.0V278.7M1287.2 273.1V281.0M1286.2 263.3V271.0M774.0 259.7V270.2M1110.6 255.2V271.3M946.4 267.6V282.0M949.3 267.8V282.0M713.8 273.2V282.0M913.7 273.2V281.3M857.0 267.6V282.0M747.6 259.4V268.4M678.5 263.1V274.4M1034.7 272.9V282.0M1132.1 262.3V269.9M584.1 269.9V277.4M1338.1 267.9V282.0M1076.4 268.1V282.0M1049.7 271.0V282.0M787.4 256.6V261.6M1125.3 253.4V261.9M1137.5 273.7V279.0M1315.8 273.2V280.5M986.8 260.7V272.0M776.3 256.3V262.6M642.9 267.2V282.0M1201.8 267.9V278.0M720.3 272.7V282.0M753.1 270.2V282.0M1201.4 256.6V263.0M1020.9 257.0V264.9M656.1 267.3V275.9M907.9 265.0V280.9M1148.0 257.4V266.8M1121.6 266.1V282.0M818.3 267.6V276.5M1335.1 268.6V278.3M1145.5 254.0V268.1M1270.1 260.9V268.8M992.4 269.6V276.2M878.8 264.1V272.9M1315.3 264.2V270.8M1295.9 252.1V264.1M919.0 256.4V267.3M677.8 257.6V263.7M994.4 270.7V278.3M1180.4 261.3V271.4M763.8 273.5V280.2M1161.0 271.7V282.0M1333.2 263.7V273.0M1141.4 268.4V275.3M1334.7 250.7V267.9M688.5 271.3V281.1M1164.3 259.7V267.5M1225.7 270.8V282.0M831.0 271.1V282.0M861.9 262.1V272.4M658.0 259.9V278.6M1077.4 271.8V282.0M1172.4 269.9V278.7M873.8 270.9V277.9M1163.9 267.0V281.8M1264.4 263.0V274.9M1194.8 269.1V282.0M841.7 259.8V266.3M590.7 271.0V279.4M624.0 269.3V277.3M890.7 270.2V282.0M1155.5 259.2V277.3M654.5 266.5V282.0M956.3 262.7V280.9M1125.3 255.9V274.6M1041.5 262.8V278.5M744.8 271.8V282.0M873.7 268.5V282.0M810.8 261.4V277.3M1006.4 264.2V279.2M1263.0 258.5V277.4M1332.1 261.3V280.3M684.7 267.2V282.0M1050.5 259.3V268.5M979.6 263.6V270.0M841.5 268.6V282.0M774.0 265.0V272.6M1167.9 267.7V282.0M1110.8 256.6V268.5M1366.1 256.1V272.6M728.7 258.5V269.6M811.9 258.2V266.5M724.1 261.3V273.9M952.8 263.1V282.0M1324.0 260.3V268.3M1341.7 258.3V268.6M850.9 268.1V279.0M890.5 263.1V272.6M1098.9 268.7V282.0M861.9 271.2V282.0M1110.4 260.6V279.8M1208.8 251.8V261.6M965.6 261.6V280.0M994.5 272.6V282.0M778.0 262.2V273.0M1298.6 262.4V271.5M1225.5 254.5V269.8M724.1 256.6V273.7M1144.7 272.1V282.0M1305.7 250.9V269.8M724.0 269.3V282.0M644.3 271.7V282.0M1349.5 248.5V254.4M587.4 270.0V282.0M699.3 258.9V273.1M1343.7 257.2V276.8M1363.9 266.1V273.7M691.5 262.1V278.1M993.1 267.8V273.3M1255.8 272.0V282.0M709.7 262.6V278.0M1210.0 269.1V281.8M1206.9 260.7V275.7M1311.3 264.2V273.9M1225.4 273.8V282.0M1174.5 257.8V272.0M636.2 272.7V282.0M1177.3 264.6V282.0M741.2 267.6V276.8M1304.1 272.6V282.0M1026.3 270.2V282.0M1259.1 259.5V278.8M664.6 269.4V276.6M674.7 267.4V278.0M1220.3 251.6V263.8M1249.4 271.4V277.0M944.3 268.5V282.0M665.8 259.1V271.6M1059.1 273.4V282.0M995.3 271.2V282.0M1306.7 252.7V268.0M893.3 258.0V265.1M963.5 259.8V270.3M863.4 273.2V282.0M1034.7 273.3V282.0M820.5 255.7V263.7M1117.0 261.0V280.2M1003.5 271.3V282.0M1052.6 260.1V279.7M1346.4 249.3V254.4M1111.2 268.2V273.2M910.4 273.4V282.0M577.1 268.2V282.0M1227.8 251.0V259.0M1234.2 252.9V271.9M1353.0 250.4V266.5M1363.2 273.8V282.0M698.6 269.0V282.0M1288.3 255.5V262.6M689.2 266.4V282.0M971.2 265.7V279.1M1003.8 254.7V260.6M762.7 257.1V269.2M837.7 269.5V277.9M1052.0 257.8V263.8M834.6 256.7V271.5M816.2 264.8V282.0M1133.6 262.1V269.6M667.7 271.2V282.0M1068.9 255.3V267.9M651.8 269.3V282.0M704.1 267.9V279.4M643.0 272.2V277.3M887.9 258.6V265.0M1363.1 256.1V265.1M747.6 262.9V278.2M1304.1 251.2V263.8M803.0 272.8V282.0M682.8 264.5V271.4M1126.6 265.3V282.0M1140.8 269.8V276.5M612.9 266.5V282.0M1125.0 260.9V276.6M1350.6 259.1V264.1M1149.4 271.1V282.0M1265.9 267.1V273.8M1105.9 253.9V259.6M1084.0 273.0V282.0M984.0 263.9V274.0M977.4 266.0V274.3M971.3 264.3V275.6M1131.5 269.4V282.0M1308.6 261.6V272.2M890.8 268.4V282.0M1153.4 257.2V268.9M735.5 259.8V276.6M1109.6 266.6V282.0M1158.2 263.0V273.5M1262.4 260.4V271.7M1347.4 252.4V259.8M869.0 257.2V275.7M887.2 266.3V275.1M881.3 262.1V267.3M1177.5 259.3V274.5M720.4 255.9V271.0M756.2 266.3V279.9M599.0 261.9V276.6M977.0 256.9V265.1M902.3 261.8V280.3M1357.1 253.7V271.6M1216.7 257.2V273.8M1357.6 248.7V259.5M1068.7 269.6V282.0M879.0 270.2V276.7M1170.6 261.8V281.7M938.6 258.8V263.8M642.6 262.5V274.0M705.0 265.0V277.4M1257.2 255.0V273.1M837.7 266.7V280.2M637.4 273.2V282.0M1093.9 264.7V274.6M858.0 262.6V270.0M1100.5 262.9V274.0M1200.4 261.7V279.2M1114.5 267.4V279.8M727.6 258.7V273.4M776.5 267.4V274.4M707.0 265.0V274.7M676.9 264.5V278.8M816.3 267.9V281.1M1192.4 264.4V272.7M1232.5 263.8V280.1M927.9 273.4V282.0M711.4 270.8V282.0M1280.4 260.2V277.6M840.4 255.5V265.6M627.6 267.2V274.0M751.7 257.1V276.0M1058.6 271.3V278.4M940.3 269.9V281.7M767.7 268.3V279.2M743.4 273.1V282.0M1269.0 258.3V266.5M1154.3 266.7V277.8M693.0 272.5V282.0M1198.0 255.9V271.7M1218.3 253.1V262.2M955.0 261.9V275.6M919.0 254.8V271.7M1232.9 263.5V277.5M1197.5 266.7V282.0M1107.3 273.0V280.9M898.7 264.6V271.8M1261.5 259.2V266.4M1030.8 258.0V270.1M920.9 264.4V282.0M814.5 268.9V277.3M1087.3 261.5V273.7M1083.4 267.8V275.1M610.3 260.4V266.7M638.9 264.7V273.5M661.0 259.8V265.0M736.8 256.1V272.5M1313.0 258.5V268.2M1326.4 261.4V273.0M1183.3 270.2V282.0M894.2 271.9V282.0M1016.6 263.4V277.0M1014.8 271.3V277.5M1272.7 273.5V278.7M1074.4 270.9V282.0M809.6 268.6V282.0M1082.8 267.2V282.0M922.4 261.0V274.9M814.0 265.4V282.0M1153.4 254.1V273.1M1147.8 260.6V268.3M970.1 262.6V269.4M809.5 273.4V282.0M752.0 273.4V282.0M1234.4 259.7V276.1M732.0 263.6V280.1" stroke="#000c70" stroke-width="1.4" opacity="0.6" fill="none"/>
<path d="M791.6 255.4V263.3M714.1 258.2V264.7M747.5 269.2V282.0M1338.0 270.3V276.9M988.8 259.1V266.7M739.5 257.0V266.0M1211.3 272.8V282.0M1361.5 263.8V272.1M679.4 265.2V279.0M1256.5 273.0V282.0M584.0 265.1V274.5M1264.6 259.9V272.9M764.5 267.6V281.4M1337.3 271.4V279.9M1181.4 258.5V267.4M728.3 255.8V268.8M692.8 268.4V279.1M1037.8 258.0V273.6M750.6 269.7V282.0M609.2 265.2V272.5M974.4 264.7V275.1M747.1 261.3V273.5M1184.7 260.0V271.8M1078.2 259.6V265.2M809.4 256.5V272.7M1338.9 249.1V258.4M767.8 260.1V272.1M1179.2 265.3V282.0M1303.8 269.0V282.0M838.5 270.6V280.8M1246.6 271.1V278.2M1074.6 271.9V282.0M735.9 262.2V272.6M643.7 265.3V282.0M854.6 259.2V275.4M1333.4 274.0V282.0M716.3 272.3V282.0M588.7 266.9V282.0M1291.5 254.1V267.8M1239.0 272.2V278.0M923.2 256.4V262.4M685.4 258.8V264.9M1259.7 263.7V268.8M1151.3 260.2V274.7M891.2 258.3V265.1M835.4 262.4V276.5M751.9 256.5V265.4M881.9 259.7V268.2M1201.2 264.4V276.2M1049.6 260.9V271.8M1151.2 261.4V280.8M784.6 272.2V282.0M1254.4 261.7V270.8M911.0 272.7V279.0M652.1 260.8V267.5M922.6 268.7V277.6M1087.7 256.0V268.4M612.7 273.8V282.0M1314.4 253.2V260.2M700.7 272.7V282.0M769.6 272.4V280.7M1299.2 269.1V282.0M755.2 264.0V281.4M1178.0 265.0V272.4M796.8 267.0V280.5M734.2 264.9V271.6M1103.9 267.7V282.0M1272.6 262.1V272.0M893.2 268.2V274.2M688.0 262.3V277.3M758.9 269.5V278.1M1236.1 261.1V273.7M693.4 261.2V271.1M694.3 256.9V270.1M724.8 267.9V280.3M1268.0 273.9V282.0M1197.3 271.0V282.0M718.0 265.4V274.5M814.5 261.9V278.2M618.6 262.4V267.9M988.8 267.6V282.0M753.0 261.7V268.3M958.8 268.4V282.0M1305.8 270.3V280.2M1280.8 259.8V267.7M804.4 258.9V276.8M1038.6 261.7V267.3M800.9 268.4V281.1M1244.3 258.3V269.5M1155.3 253.2V261.5M655.0 266.9V272.4M1345.7 266.8V275.8M995.1 271.3V279.4M803.5 260.4V279.2M1264.3 273.8V282.0M794.2 272.6V282.0M1333.2 255.3V271.4M970.0 255.0V271.3M670.1 269.9V279.3M1312.1 253.6V259.1M1024.8 264.9V273.2M1155.0 254.7V272.3M938.3 261.8V278.7M656.3 268.5V282.0M672.3 268.0V277.3M657.4 256.5V268.3" stroke="#0c48c8" stroke-width="1.1" opacity="0.45" fill="none"/>
<rect x="272.6" y="279.6" width="1096.7" height="4.6" fill="#0a48e8" opacity="0.5"/>
<path d="M272.6 121.0V283.6M382.3 121.0V283.6M491.9 121.0V283.6M601.6 121.0V283.6M711.3 121.0V283.6M820.9 121.0V283.6M930.6 121.0V283.6M1040.3 121.0V283.6M1150.0 121.0V283.6M1259.6 121.0V283.6M1369.3 121.0V283.6M272.6 121.0H1369.3M272.6 148.8H1369.3M272.6 176.5H1369.3M272.6 204.3H1369.3M272.6 232.0H1369.3M272.6 259.8H1369.3M272.6 287.6H1369.3" stroke="#8c8c84" stroke-width="1" opacity="0.54" fill="none"/>
<rect x="272.6" y="283" width="1096.7" height="115.6" fill="url(#band)"/>
<path d="M440.3 398.6V394.9M739.2 398.6V384.7M1256.5 398.6V397.2M887.7 398.6V395.9M310.1 398.6V395.7M1276.5 398.6V396.8M915.4 398.6V392.4M342.1 398.6V385.7M392.7 398.6V396.8M1057.6 398.6V398.5M684.5 398.6V397.9M791.8 398.6V398.5M438.6 398.6V397.3M362.3 398.6V398.1M486.1 398.6V395.0M423.1 398.6V390.0M729.9 398.6V397.1M537.1 398.6V389.5M324.4 398.6V391.8M380.0 398.6V384.1M720.4 398.6V394.0M1219.1 398.6V398.1M343.2 398.6V392.7M917.0 398.6V392.2M577.5 398.6V395.2M477.6 398.6V395.7M581.7 398.6V394.2M600.8 398.6V397.0M977.2 398.6V398.2M1151.1 398.6V395.2M523.8 398.6V398.0M830.6 398.6V395.1M1061.6 398.6V396.3M724.8 398.6V387.4M573.1 398.6V378.8M1251.2 398.6V376.6M1306.8 398.6V397.1M1165.5 398.6V393.9M496.6 398.6V376.6M982.9 398.6V390.3M884.6 398.6V398.2M1219.2 398.6V397.6M557.0 398.6V393.8M485.6 398.6V395.5M1055.1 398.6V398.1M997.1 398.6V398.0M794.3 398.6V393.4M1026.3 398.6V398.4M482.4 398.6V382.5M701.6 398.6V395.8M683.6 398.6V392.6M1084.5 398.6V393.3M714.0 398.6V394.4M837.9 398.6V397.6M1313.6 398.6V381.9M1125.1 398.6V376.6M783.3 398.6V389.5M536.8 398.6V391.8M1056.6 398.6V384.7M1186.4 398.6V388.0M566.4 398.6V390.9M793.9 398.6V396.7M676.8 398.6V390.6M1196.7 398.6V389.3M1006.7 398.6V397.7M443.6 398.6V394.4M505.4 398.6V396.5M385.3 398.6V397.8M1058.9 398.6V397.3M1202.3 398.6V396.6M1203.3 398.6V396.8M566.2 398.6V396.1M286.2 398.6V395.7M689.4 398.6V398.5M1217.2 398.6V396.2M273.5 398.6V382.5M523.4 398.6V397.1M299.6 398.6V398.1M1050.9 398.6V394.2M825.4 398.6V397.2M587.3 398.6V381.1M681.0 398.6V376.6M1244.8 398.6V397.9M1202.6 398.6V398.5M1052.3 398.6V390.3M1035.3 398.6V394.6M1163.9 398.6V397.8M864.6 398.6V397.1M710.5 398.6V397.5M1049.3 398.6V394.3M1127.0 398.6V393.7M929.7 398.6V385.9M1163.5 398.6V394.4M630.4 398.6V385.5M679.7 398.6V398.1M638.3 398.6V392.5M1293.7 398.6V393.4M999.1 398.6V384.8M1125.6 398.6V395.7M779.1 398.6V391.5M621.2 398.6V398.0M952.1 398.6V390.3M545.1 398.6V392.8M1251.2 398.6V397.9M421.8 398.6V395.2M639.4 398.6V383.7M1365.4 398.6V395.7M1142.3 398.6V393.6M463.1 398.6V380.8M464.2 398.6V398.2M769.0 398.6V398.5M799.9 398.6V395.9M1318.9 398.6V395.9M1204.3 398.6V391.0M915.6 398.6V397.2M607.1 398.6V395.2M706.0 398.6V393.4M826.9 398.6V396.6M938.1 398.6V376.6M495.0 398.6V396.6M286.2 398.6V398.1M333.8 398.6V395.9M1189.8 398.6V392.6M1331.8 398.6V389.5M915.1 398.6V394.3M286.7 398.6V396.2M559.8 398.6V393.8M344.8 398.6V394.7M684.6 398.6V395.2M716.2 398.6V398.1M1074.7 398.6V390.5M928.6 398.6V398.0M929.7 398.6V388.4M1354.3 398.6V391.5M323.2 398.6V388.1M1001.9 398.6V397.0M1281.4 398.6V389.9M1254.1 398.6V397.2M905.4 398.6V396.2M597.4 398.6V391.4M948.7 398.6V396.6M868.2 398.6V385.4M894.1 398.6V386.4M893.4 398.6V376.6M304.9 398.6V395.5M878.3 398.6V392.1M1334.7 398.6V393.7M796.9 398.6V393.6M857.6 398.6V392.5M1310.9 398.6V398.5M624.1 398.6V388.1M338.4 398.6V390.8M306.9 398.6V393.4M1150.2 398.6V397.2M690.8 398.6V397.3M1045.4 398.6V394.8M936.7 398.6V396.6M916.0 398.6V383.2M1127.0 398.6V383.4M543.9 398.6V395.0M695.7 398.6V396.5M1153.5 398.6V397.6M885.1 398.6V391.2M1298.3 398.6V398.5M569.7 398.6V395.2M1299.3 398.6V397.7M1194.5 398.6V396.1M873.4 398.6V385.4M343.4 398.6V396.6M443.7 398.6V397.9M605.8 398.6V392.6M909.1 398.6V398.0M1151.4 398.6V395.1M429.9 398.6V390.0M1172.6 398.6V397.4M1302.8 398.6V390.3M524.1 398.6V398.6M1223.6 398.6V389.9M380.0 398.6V391.3M1120.4 398.6V393.6M1185.4 398.6V377.7M632.2 398.6V389.6M1282.4 398.6V396.7M1022.1 398.6V392.8M1203.3 398.6V394.4M575.1 398.6V397.2M867.9 398.6V397.9M1215.1 398.6V387.6M538.5 398.6V392.6M1010.8 398.6V398.0M1126.1 398.6V391.3M608.7 398.6V398.1M581.9 398.6V391.2M784.5 398.6V390.2M447.9 398.6V398.0M655.5 398.6V388.0M450.4 398.6V398.2M1098.1 398.6V398.1M1004.9 398.6V398.2M543.5 398.6V393.2M1230.4 398.6V396.0M765.7 398.6V398.4M646.4 398.6V397.2M1137.4 398.6V392.3M1132.7 398.6V394.8M1039.5 398.6V397.9M695.0 398.6V396.9M582.3 398.6V391.9M507.7 398.6V396.6M582.5 398.6V388.6M972.8 398.6V395.3M689.3 398.6V385.9M1302.6 398.6V395.6M894.2 398.6V388.7M554.0 398.6V397.1M386.0 398.6V395.1M1115.2 398.6V397.7M747.0 398.6V376.6M800.4 398.6V396.2M1193.0 398.6V387.5M685.2 398.6V397.9M970.7 398.6V391.9M1284.9 398.6V393.2M610.2 398.6V395.0M588.4 398.6V395.6M786.1 398.6V386.4M1265.9 398.6V385.6M796.9 398.6V381.9M425.3 398.6V385.9M974.7 398.6V388.3M726.0 398.6V376.6M300.4 398.6V389.2M1171.2 398.6V396.3M1181.3 398.6V397.4M1097.8 398.6V395.4M723.6 398.6V397.5M1149.9 398.6V392.0M370.5 398.6V379.5M515.5 398.6V396.2M727.5 398.6V394.3M1248.7 398.6V384.1M967.0 398.6V396.3M390.7 398.6V398.2M841.7 398.6V394.2M763.2 398.6V378.4M726.3 398.6V396.4M731.2 398.6V397.7M1302.3 398.6V394.1M867.9 398.6V395.8M547.0 398.6V396.7M814.0 398.6V395.6M1346.3 398.6V394.5M499.9 398.6V398.3M447.5 398.6V396.5M1130.6 398.6V387.6M532.1 398.6V391.0M757.0 398.6V394.7M857.1 398.6V398.4M345.5 398.6V393.1M1028.3 398.6V396.2M1280.3 398.6V390.0M603.9 398.6V398.3M879.4 398.6V393.3M518.9 398.6V398.4M806.9 398.6V398.4M1080.5 398.6V393.7M579.0 398.6V395.6M528.3 398.6V397.6M471.9 398.6V390.1M769.8 398.6V392.3M653.9 398.6V390.4M926.0 398.6V393.3M703.4 398.6V394.5M481.9 398.6V380.4M1009.7 398.6V394.8M973.0 398.6V398.1M639.5 398.6V397.3M1197.0 398.6V398.5M760.3 398.6V388.5M1130.7 398.6V392.3M603.5 398.6V397.3M1044.9 398.6V396.8M1065.5 398.6V396.4M1106.6 398.6V394.3M1166.7 398.6V377.4M687.9 398.6V377.1M283.9 398.6V388.1M305.6 398.6V394.7M698.5 398.6V391.3M618.3 398.6V397.4M1132.3 398.6V394.6M1101.2 398.6V395.2M313.1 398.6V391.2M512.1 398.6V395.4M273.6 398.6V397.1M1002.5 398.6V391.4M970.5 398.6V395.7M1076.1 398.6V393.1M498.8 398.6V394.8M928.3 398.6V392.1M489.7 398.6V396.7M648.9 398.6V398.1M654.9 398.6V392.1M906.0 398.6V397.7M1074.9 398.6V398.0M1096.3 398.6V397.8M378.7 398.6V397.2M837.4 398.6V397.0M1241.9 398.6V384.7M583.6 398.6V391.7M1035.4 398.6V394.5M552.4 398.6V383.7M1321.3 398.6V398.5M634.8 398.6V396.7M490.5 398.6V395.8M1257.4 398.6V398.5M1189.0 398.6V396.8M287.9 398.6V387.1M571.5 398.6V397.4M400.9 398.6V396.3M404.0 398.6V397.6M547.1 398.6V394.3M762.0 398.6V396.8M849.4 398.6V391.2M1066.6 398.6V396.5M1279.1 398.6V390.8M888.7 398.6V395.4M634.2 398.6V397.9M1243.6 398.6V393.9M381.1 398.6V385.6M1245.2 398.6V398.4M1040.8 398.6V397.2M860.0 398.6V389.6M657.2 398.6V395.2M1002.1 398.6V397.5M959.6 398.6V395.8M1349.8 398.6V397.6M1052.3 398.6V398.4M573.5 398.6V398.0M436.2 398.6V394.8M464.2 398.6V390.7M378.6 398.6V393.7M1216.7 398.6V397.9M511.3 398.6V391.4M788.4 398.6V385.1M643.4 398.6V396.1M1322.5 398.6V396.5M1332.1 398.6V387.5M492.5 398.6V394.7M1304.6 398.6V398.0M1203.3 398.6V391.2M1094.3 398.6V394.0M382.6 398.6V382.7M385.2 398.6V390.9M1065.7 398.6V396.7M1023.4 398.6V396.0M1095.8 398.6V398.4M1296.0 398.6V396.2M1153.3 398.6V395.4M1163.3 398.6V396.8M870.5 398.6V398.5M809.2 398.6V398.2M1214.7 398.6V392.9M738.9 398.6V380.3M1310.6 398.6V382.9M363.4 398.6V392.5M1070.4 398.6V393.9M290.3 398.6V385.7M753.6 398.6V394.1M1165.9 398.6V397.0M305.0 398.6V385.8M569.5 398.6V398.4M422.8 398.6V376.6M1083.8 398.6V397.4M433.6 398.6V387.2M1001.6 398.6V394.2M416.8 398.6V395.9M1310.4 398.6V398.6M732.4 398.6V398.3M1366.5 398.6V398.0M1318.3 398.6V389.4M1075.0 398.6V398.4M1035.2 398.6V395.2M811.4 398.6V397.8M834.4 398.6V390.5M417.1 398.6V388.2M733.3 398.6V397.1M535.2 398.6V395.5M982.6 398.6V394.4M1248.5 398.6V395.0M834.8 398.6V376.6M508.9 398.6V398.5M633.0 398.6V396.7M408.9 398.6V395.9M311.0 398.6V385.9M803.9 398.6V388.0M1037.5 398.6V392.1M1104.4 398.6V396.8M1072.1 398.6V397.4M881.1 398.6V394.1M1123.0 398.6V397.7M650.1 398.6V389.9M1154.8 398.6V379.5M402.7 398.6V397.4M389.9 398.6V392.2M1090.0 398.6V393.4M1127.4 398.6V395.0M889.3 398.6V385.9M983.5 398.6V393.3M918.3 398.6V395.2M1102.5 398.6V394.4M414.4 398.6V395.8M734.8 398.6V395.8M887.8 398.6V396.4M701.7 398.6V395.8M680.1 398.6V380.7M372.0 398.6V398.5M1063.8 398.6V396.1M765.0 398.6V394.1M675.2 398.6V397.2" stroke="#0838e0" stroke-width="1.2" opacity="0.6" fill="none"/>
<path d="M844 294 Q846.5 284 849 294 L848 340 L845 340 Z" fill="#c8e800" opacity="0.2"/>
<path d="M841 286 Q846.5 274 852 286 Z" fill="#20a0ff" opacity="0.8"/>
<rect x="546" y="292" width="27" height="107" fill="url(#trough)" mask="url(#tm)"/>
<path d="M544.5 122.4 L565.5 122.4 L568.0 123.0 L566.1 126.1 L566.2 129.0 L566.6 132.7 L566.6 137.9 L566.6 142.0 L567.9 147.2 L568.0 151.2 L568.1 154.6 L567.4 158.9 L566.3 162.8 L567.9 165.7 L567.4 169.5 L567.0 173.6 L566.1 176.8 L567.4 180.5 L565.6 184.9 L566.7 189.9 L566.3 192.6 L567.7 195.9 L566.4 200.3 L566.4 203.7 L566.5 207.2 L567.7 212.4 L567.9 217.4 L565.9 222.2 L566.0 224.8 L567.0 228.2 L567.1 233.6 L566.2 237.6 L567.6 243.5 L565.7 247.2 L566.3 253.2 L565.9 258.6 L566.3 263.4 L565.4 269.0 L564.7 271.9 L566.0 277.2 L564.6 282.0 L563.0 285.4 L564.5 288.3 L563.1 290.9 L561.5 294.6 L562.9 298.7 L563.5 312 L560 332 L557.5 312 L555.5 292 L552.5 279 L543.0 273.1 L544.3 270.0 L543.8 266.5 L543.6 263.2 L543.8 257.5 L542.7 253.9 L542.6 249.5 L543.2 246.9 L543.9 242.1 L542.6 238.2 L543.1 233.6 L544.7 227.7 L544.1 224.1 L544.3 220.9 L543.1 216.9 L543.2 212.4 L542.6 209.1 L544.6 204.0 L543.4 200.7 L542.5 196.1 L544.6 191.4 L543.5 185.8 L544.3 181.0 L544.1 178.3 L542.7 175.5 L544.1 171.4 L543.8 165.5 L544.4 162.6 L544.3 157.1 L543.3 153.7 L544.3 149.6 L542.9 144.7 L544.4 141.3 L542.4 135.7 L543.5 132.1 L544.6 128.6 L542.3 123.0 Z" fill="url(#pk)"/>
<path d="M548.3 203.3V232.3M555.2 146.6V182.6M547.2 145.9V161.7M555.3 184.0V209.7M559.5 236.6V259.6M545.8 228.7V237.3M551.4 142.0V169.3M560.6 140.2V157.7M562.0 210.8V222.3M558.7 224.0V245.1M548.1 207.0V225.2M547.7 144.8V165.6M547.5 172.5V198.2M556.0 174.9V208.5M546.8 165.6V203.4M562.3 240.0V272.5M555.7 223.2V249.6M547.4 156.2V167.3M562.5 164.6V185.6M555.8 136.7V167.3M560.9 224.3V260.5M551.3 142.3V174.7M558.9 170.8V189.8M548.1 228.8V251.6M561.2 166.8V185.1M555.3 217.9V254.2" stroke="#f09000" stroke-width="1.3" opacity="0.85" fill="none"/>
<path d="M553.1 225.2V234.1M563.2 235.0V245.6M553.3 164.0V178.6M562.0 168.6V173.6M549.9 264.8V269.2M562.2 201.2V211.9M556.8 183.9V194.6M547.8 258.3V263.5M548.8 222.2V233.9M562.1 225.1V240.3M547.0 125.6V132.4M561.6 146.3V156.7M561.4 146.8V157.1M564.0 233.1V241.9" stroke="#70c020" stroke-width="1.1" opacity="0.8" fill="none"/>
<path d="M564.6 174.5V188.1M566.3 238.9V245.9M566.0 207.9V219.9M564.0 271.1V281.9M564.5 220.0V232.1M564.9 283.6V287.7M566.9 244.3V253.2M566.7 153.8V161.2M565.9 261.7V269.5M567.5 233.8V238.2" stroke="#20b0c0" stroke-width="1.1" opacity="0.8" fill="none"/>
<path d="M559.6 300 V398.6" stroke="#0a2890" stroke-width="1.6" opacity="0.9"/>
<path d="M559 268 V300" stroke="#d09000" stroke-width="1.4" opacity="0.9"/>
<path d="M1092.2 124 L1095.4 124 L1099.5 282 L1089.5 282 Z" fill="#101c50" opacity="0.75"/>
<path d="M1093.8 123 V283" stroke="#8a3418" stroke-width="2" opacity="0.85"/>
<path d="M1096.6 190 V283" stroke="#6a5a18" stroke-width="1.2" opacity="0.75"/>
<path d="M1091.6 200 V283" stroke="#1a5a50" stroke-width="1.2" opacity="0.7"/>
<path d="M272.6 282.6 L274.2 283.2 L275.8 282.8 L277.4 282.1 L279.0 283.6 L280.6 283.5 L282.2 283.8 L283.8 284.9 L285.4 284.9 L287.0 283.2 L288.6 283.0 L290.2 283.1 L291.8 284.2 L293.4 283.2 L295.0 282.1 L296.6 281.6 L298.2 282.0 L299.8 282.9 L301.4 282.7 L303.0 283.6 L304.6 283.5 L306.2 283.0 L307.8 283.2 L309.4 282.6 L311.0 284.0 L312.6 284.6 L314.2 283.3 L315.8 284.1 L317.4 280.0 L319.0 282.8 L320.6 282.1 L322.2 282.3 L323.8 281.8 L325.4 278.5 L327.0 273.7 L328.6 270.9 L330.2 277.0 L331.8 282.9 L333.4 283.6 L335.0 283.8 L336.6 278.7 L338.2 282.7 L339.8 282.7 L341.4 284.3 L343.0 284.9 L344.6 282.1 L346.2 285.6 L347.8 284.4 L349.4 283.3 L351.0 283.9 L352.6 284.8 L354.2 284.8 L355.8 283.3 L357.4 284.7 L359.0 284.1 L360.6 285.1 L362.2 284.5 L363.8 284.2 L365.4 284.5 L367.0 285.0 L368.6 284.5 L370.2 283.3 L371.8 282.2 L373.4 283.0 L375.0 284.4 L376.6 283.2 L378.2 283.6 L379.8 282.3 L381.4 283.5 L383.0 282.9 L384.6 284.1 L386.2 279.2 L387.8 283.6 L389.4 282.3 L391.0 282.2 L392.6 284.1 L394.2 282.8 L395.8 282.1 L397.4 282.6 L399.0 282.6 L400.6 283.0 L402.2 283.0 L403.8 282.8 L405.4 282.3 L407.0 283.2 L408.6 284.5 L410.2 284.7 L411.8 283.9 L413.4 284.0 L415.0 283.8 L416.6 284.2 L418.2 283.7 L419.8 283.6 L421.4 284.6 L423.0 284.3 L424.6 283.3 L426.2 284.0 L427.8 284.3 L429.4 283.7 L431.0 283.5 L432.6 284.5 L434.2 283.7 L435.8 282.5 L437.4 282.9 L439.0 283.6 L440.6 281.9 L442.2 282.6 L443.8 281.8 L445.4 283.0 L447.0 284.2 L448.6 285.1 L450.2 284.7 L451.8 283.6 L453.4 282.3 L455.0 282.4 L456.6 283.0 L458.2 282.7 L459.8 283.9 L461.4 284.5 L463.0 284.2 L464.6 283.7 L466.2 284.8 L467.8 284.9 L469.4 283.4 L471.0 284.3 L472.6 284.3 L474.2 283.4 L475.8 280.7 L477.4 283.2 L479.0 284.6 L480.6 281.9 L482.2 283.3 L483.8 284.3 L485.4 284.7 L487.0 283.0 L488.6 284.1 L490.2 283.9 L491.8 284.7 L493.4 279.3 L495.0 283.5 L496.6 284.3 L498.2 285.3 L499.8 285.6 L501.4 283.6 L503.0 282.9 L504.6 282.8 L506.2 282.0 L507.8 281.8 L509.4 282.6 L511.0 283.1 L512.6 282.9 L514.2 283.8 L515.8 284.7 L517.4 285.1 L519.0 284.6 L520.6 284.3 L522.2 283.0 L523.8 282.3 L525.4 283.4 L527.0 283.8 L528.6 284.3 L530.2 284.3 L531.8 284.1 L533.4 283.3 L535.0 284.4 L536.6 285.2 L538.2 283.8 L539.8 282.6 L541.4 283.1 L543.0 284.4 L544.6 284.4 L546.2 284.8 L547.8 283.0 L549.4 284.0 L551.0 282.8 L552.6 283.6 L554.2 282.3 L555.8 281.6 L557.4 282.2 L559.0 281.5 L560.6 281.8 L562.2 282.4 L563.8 278.4 L565.4 283.6 L567.0 282.3 L568.6 283.9 L570.2 283.0 L571.8 284.3 L573.4 284.0 L575.0 282.8 L576.6 283.5 L578.2 283.9 L579.8 283.4 L581.4 282.2 L583.0 283.8 L584.6 282.6 L586.2 282.2 L587.8 282.1 L589.4 283.6 L591.0 283.3 L592.6 282.8 L594.2 283.6 L595.8 283.3 L597.4 284.2 L599.0 283.0 L600.6 283.6 L602.2 283.7 L603.8 284.3 L605.4 284.1 L607.0 283.2 L608.6 282.3 L610.2 283.9 L611.8 282.7 L613.4 283.3 L615.0 282.2 L616.6 283.0 L618.2 282.2 L619.8 282.1 L621.4 282.9 L623.0 284.4 L624.6 283.8 L626.2 284.6 L627.8 284.9 L629.4 284.9 L631.0 285.5 L632.6 285.3 L634.2 284.7 L635.8 283.5 L637.4 282.8 L639.0 283.1 L640.6 283.9 L642.2 285.0 L643.8 285.2 L645.4 284.9 L647.0 285.5 L648.6 281.1 L650.2 284.0 L651.8 282.8 L653.4 282.1 L655.0 282.6 L656.6 283.1 L658.2 283.0 L659.8 282.0 L661.4 284.0 L663.0 283.4 L664.6 284.1 L666.2 282.3 L667.8 283.4 L669.4 283.2 L671.0 284.6 L672.6 284.4 L674.2 284.4 L675.8 284.9 L677.4 283.1 L679.0 283.4 L680.6 282.4 L682.2 282.6 L683.8 282.5 L685.4 282.6 L687.0 284.1 L688.6 283.3 L690.2 284.7 L691.8 283.4 L693.4 282.4 L695.0 283.7 L696.6 284.4 L698.2 285.1 L699.8 285.2 L701.4 285.5 L703.0 284.0 L704.6 283.8 L706.2 282.8 L707.8 283.4 L709.4 282.6 L711.0 283.0 L712.6 282.6 L714.2 283.6 L715.8 283.9 L717.4 285.0 L719.0 283.2 L720.6 282.5 L722.2 282.0 L723.8 283.0 L725.4 283.2 L727.0 283.9 L728.6 283.3 L730.2 284.6 L731.8 285.4 L733.4 284.3 L735.0 283.4 L736.6 284.5 L738.2 284.1 L739.8 284.9 L741.4 283.3 L743.0 283.5 L744.6 282.7 L746.2 280.8 L747.8 283.0 L749.4 283.1 L751.0 282.6 L752.6 282.3 L754.2 281.8 L755.8 282.3 L757.4 282.5 L759.0 281.8 L760.6 282.7 L762.2 283.3 L763.8 283.0 L765.4 283.8 L767.0 282.7 L768.6 282.5 L770.2 284.2 L771.8 284.9 L773.4 285.1 L775.0 284.3 L776.6 284.3 L778.2 283.2 L779.8 283.7 L781.4 282.6 L783.0 285.4 L784.6 284.0 L786.2 282.8 L787.8 284.2 L789.4 280.7 L791.0 284.2 L792.6 284.0 L794.2 283.1 L795.8 282.2 L797.4 282.2 L799.0 282.9 L800.6 284.4 L802.2 283.4 L803.8 284.4 L805.4 283.9 L807.0 285.0 L808.6 283.6 L810.2 283.1 L811.8 280.6 L813.4 283.3 L815.0 284.3 L816.6 284.3 L818.2 283.3 L819.8 283.5 L821.4 284.3 L823.0 283.6 L824.6 284.5 L826.2 285.2 L827.8 283.4 L829.4 282.2 L831.0 283.3 L832.6 283.3 L834.2 282.5 L835.8 283.8 L837.4 283.9 L839.0 283.0 L840.6 282.1 L842.2 282.9 L843.8 283.4 L845.4 283.4 L847.0 282.9 L848.6 284.4 L850.2 282.7 L851.8 282.3 L853.4 282.9 L855.0 284.3 L856.6 279.2 L858.2 283.5 L859.8 283.5 L861.4 283.4 L863.0 283.8 L864.6 282.7 L866.2 283.2 L867.8 283.9 L869.4 284.7 L871.0 285.0 L872.6 284.3 L874.2 283.6 L875.8 284.5 L877.4 282.8 L879.0 283.3 L880.6 283.8 L882.2 282.7 L883.8 282.3 L885.4 281.9 L887.0 281.5 L888.6 282.8 L890.2 283.9 L891.8 284.7 L893.4 285.3 L895.0 283.5 L896.6 282.7 L898.2 283.2 L899.8 283.4 L901.4 283.9 L903.0 283.7 L904.6 283.4 L906.2 282.8 L907.8 283.1 L909.4 282.2 L911.0 284.1 L912.6 284.6 L914.2 283.1 L915.8 284.3 L917.4 282.8 L919.0 283.5 L920.6 284.0 L922.2 283.0 L923.8 282.3 L925.4 283.8 L927.0 283.7 L928.6 283.7 L930.2 280.9 L931.8 282.5 L933.4 284.1 L935.0 283.0 L936.6 282.7 L938.2 283.5 L939.8 284.2 L941.4 284.8 L943.0 284.9 L944.6 283.7 L946.2 283.3 L947.8 284.4 L949.4 284.0 L951.0 284.8 L952.6 283.9 L954.2 283.9 L955.8 283.1 L957.4 283.8 L959.0 284.8 L960.6 285.5 L962.2 284.7 L963.8 283.8 L965.4 283.7 L967.0 284.4 L968.6 283.4 L970.2 282.3 L971.8 283.8 L973.4 284.9 L975.0 284.0 L976.6 284.1 L978.2 284.8 L979.8 279.9 L981.4 284.1 L983.0 282.8 L984.6 284.2 L986.2 283.8 L987.8 282.9 L989.4 282.1 L991.0 283.4 L992.6 284.2 L994.2 284.8 L995.8 285.4 L997.4 284.7 L999.0 285.0 L1000.6 284.8 L1002.2 283.8 L1003.8 284.7 L1005.4 283.6 L1007.0 282.5 L1008.6 282.5 L1010.2 284.2 L1011.8 283.6 L1013.4 283.7 L1015.0 283.5 L1016.6 284.7 L1018.2 284.3 L1019.8 283.0 L1021.4 283.3 L1023.0 283.3 L1024.6 284.5 L1026.2 285.1 L1027.8 284.8 L1029.4 283.7 L1031.0 284.3 L1032.6 283.8 L1034.2 283.7 L1035.8 284.9 L1037.4 283.3 L1039.0 283.1 L1040.6 282.1 L1042.2 283.2 L1043.8 282.8 L1045.4 282.7 L1047.0 282.2 L1048.6 281.8 L1050.2 281.3 L1051.8 281.2 L1053.4 280.6 L1055.0 280.2 L1056.6 280.0 L1058.2 279.7 L1059.8 279.4 L1061.4 279.3 L1063.0 278.2 L1064.6 276.7 L1066.2 275.1 L1067.8 273.7 L1069.4 272.3 L1071.0 249.6 L1072.6 224.1 L1074.2 196.8 L1075.8 146.5 L1077.4 121.6 L1079.0 122.0 L1080.6 121.7 L1082.2 121.9 L1083.8 159.0 L1085.4 204.8 L1087.0 230.1 L1088.6 255.9 L1090.2 272.5 L1091.8 274.0 L1093.4 275.6 L1095.0 276.9 L1096.6 278.7 L1098.2 279.4 L1099.8 279.6 L1101.4 279.6 L1103.0 280.2 L1104.6 280.5 L1106.2 281.0 L1107.8 279.2 L1109.4 281.8 L1111.0 281.9 L1112.6 282.1 L1114.2 282.7 L1115.8 283.2 L1117.4 283.3 L1119.0 283.8 L1120.6 284.3 L1122.2 285.1 L1123.8 285.6 L1125.4 285.5 L1127.0 285.5 L1128.6 284.5 L1130.2 284.9 L1131.8 284.4 L1133.4 279.7 L1135.0 282.1 L1136.6 281.7 L1138.2 281.9 L1139.8 283.3 L1141.4 283.2 L1143.0 283.5 L1144.6 283.6 L1146.2 283.5 L1147.8 284.0 L1149.4 284.3 L1151.0 284.7 L1152.6 283.8 L1154.2 282.7 L1155.8 284.1 L1157.4 283.0 L1159.0 284.1 L1160.6 284.8 L1162.2 283.8 L1163.8 284.3 L1165.4 283.5 L1167.0 283.3 L1168.6 282.7 L1170.2 283.6 L1171.8 284.0 L1173.4 282.6 L1175.0 282.5 L1176.6 284.2 L1178.2 282.8 L1179.8 282.2 L1181.4 282.9 L1183.0 282.6 L1184.6 282.2 L1186.2 283.9 L1187.8 283.1 L1189.4 282.3 L1191.0 283.3 L1192.6 283.5 L1194.2 284.2 L1195.8 285.0 L1197.4 283.5 L1199.0 284.1 L1200.6 282.7 L1202.2 282.6 L1203.8 284.0 L1205.4 284.5 L1207.0 283.5 L1208.6 283.2 L1210.2 283.5 L1211.8 282.7 L1213.4 282.2 L1215.0 283.7 L1216.6 283.3 L1218.2 282.2 L1219.8 278.2 L1221.4 281.9 L1223.0 281.4 L1224.6 282.0 L1226.2 282.6 L1227.8 283.7 L1229.4 284.9 L1231.0 283.4 L1232.6 284.5 L1234.2 284.2 L1235.8 283.5 L1237.4 282.7 L1239.0 282.7 L1240.6 283.3 L1242.2 282.3 L1243.8 282.9 L1245.4 282.6 L1247.0 282.8 L1248.6 283.4 L1250.2 283.0 L1251.8 282.0 L1253.4 282.8 L1255.0 282.7 L1256.6 283.1 L1258.2 282.2 L1259.8 282.2 L1261.4 282.2 L1263.0 282.1 L1264.6 282.4 L1266.2 283.6 L1267.8 279.4 L1269.4 284.0 L1271.0 283.9 L1272.6 284.2 L1274.2 285.0 L1275.8 283.3 L1277.4 284.4 L1279.0 284.6 L1280.6 285.1 L1282.2 285.3 L1283.8 285.3 L1285.4 284.5 L1287.0 284.9 L1288.6 285.5 L1290.2 285.2 L1291.8 284.2 L1293.4 284.0 L1295.0 283.2 L1296.6 284.3 L1298.2 284.5 L1299.8 284.3 L1301.4 282.7 L1303.0 284.3 L1304.6 283.9 L1306.2 283.1 L1307.8 282.1 L1309.4 283.6 L1311.0 282.9 L1312.6 282.9 L1314.2 284.4 L1315.8 284.5 L1317.4 282.8 L1319.0 282.1 L1320.6 282.1 L1322.2 283.3 L1323.8 284.0 L1325.4 283.9 L1327.0 284.6 L1328.6 284.4 L1330.2 283.6 L1331.8 283.1 L1333.4 283.5 L1335.0 282.9 L1336.6 281.9 L1338.2 282.6 L1339.8 284.0 L1341.4 284.5 L1343.0 283.6 L1344.6 284.9 L1346.2 284.0 L1347.8 283.2 L1349.4 282.9 L1351.0 282.7 L1352.6 284.1 L1354.2 283.1 L1355.8 283.9 L1357.4 284.7 L1359.0 284.4 L1360.6 284.8 L1362.2 283.1 L1363.8 282.7 L1365.4 282.9 L1367.0 283.3 L1368.6 284.4" stroke="#f4f4f8" stroke-width="1.25" fill="none" stroke-linejoin="round"/>
</g>
<linearGradient id="redl" x1="0" y1="322" x2="0" y2="368" gradientUnits="userSpaceOnUse"><stop offset="0" stop-color="#ff2000"/><stop offset="0.6" stop-color="#ff5000"/><stop offset="0.85" stop-color="#ffa000"/><stop offset="1" stop-color="#ffe000" stop-opacity="0.5"/></linearGradient>
<rect x="1369.2" y="322" width="1.5" height="46" fill="url(#redl)"/>
</svg>
<div class="abs" style="left:211.6px;top:470px;width:101.8px;height:35.8px;background:#4d5e5a;border-radius:6px 5px 5px 5px;"></div>
<svg style="left:295.5px;top:482.5px" width="14" height="10" viewBox="0 0 14 10"><path d="M1.4 1.8 L11.2 1.8 L6.3 8.8 Z" fill="#e6e6e6"/></svg>
<svg style="left:1349px;top:479.5px" width="18" height="18" viewBox="0 0 18 18"><path d="M2.6 2.6 L15 15 M15 2.6 L2.6 15" stroke="#f0f0f0" stroke-width="2.3" fill="none"/></svg>
<div class="abs" style="left:224.8px;top:538.4px;width:36.3px;height:302px;background:linear-gradient(to bottom,#ff2a00 0%,#ff5a00 8%,#ff9a00 16%,#ffe000 25%,#c8e400 32%,#60d400 41%,#00c800 50%,#00cc50 58%,#00d0a8 66%,#00d0f0 76%,#0090ff 86%,#0048ff 94%,#0020f0 100%);"></div>
<svg style="left:0;top:0" width="1910" height="938" viewBox="0 0 1910 938">
<rect x="272.4" y="537" width="1096.9" height="300.8" fill="#00e1ad"/>
<rect x="272.4" y="536" width="1096.9" height="1.5" fill="#a4aca4"/>
<rect x="272.4" y="537.5" width="273" height="2.1" fill="#b4e444"/>
<rect x="545" y="537.5" width="824.3" height="2.1" fill="#38e68c"/>
<rect x="543" y="537.4" width="13" height="2.3" rx="1" fill="#f08838"/>
<path d="M272.4 593.5H1369.3" stroke="#22d466" stroke-width="1.5" opacity="0.9"/>
<path d="M272.4 645.9H546" stroke="#a8ec58" stroke-width="1.5" opacity="0.95"/>
<path d="M548 646.2H1369.3" stroke="#30eca0" stroke-width="1" opacity="0.6"/>
<path d="M272.4 753.4H546" stroke="#90e868" stroke-width="1.1" opacity="0.8"/>
<path d="M548 753.8H1369.3" stroke="#30f0b0" stroke-width="1" opacity="0.5"/>
<path d="M700 808.6H1369.3" stroke="#40ffb8" stroke-width="1.4" opacity="0.6"/>
<path d="M272.4 808.6H700" stroke="#30f0b0" stroke-width="1" opacity="0.35"/>
<path d="M545.6 645.6L1095.5 540.3" stroke="#38d828" stroke-width="4.8" opacity="0.6"/>
<path d="M545.6 645.6L1095.5 540.3" stroke="#f09414" stroke-width="2.1"/>
<ellipse cx="1094.3" cy="540.3" rx="4" ry="1.9" fill="#ff5a14"/>
<path d="M545.6 753.4L1095.5 647.9" stroke="#38d828" stroke-width="4.8" opacity="0.6"/>
<path d="M545.6 753.4L1095.5 647.9" stroke="#f09414" stroke-width="2.1"/>
<ellipse cx="1094.3" cy="647.9" rx="4" ry="1.9" fill="#ff5a14"/>
<path d="M667.5 837.8L1095.5 754.7" stroke="#38d828" stroke-width="4.8" opacity="0.6"/>
<path d="M667.5 837.8L1095.5 754.7" stroke="#f09414" stroke-width="2.1"/>
<ellipse cx="1094.3" cy="754.7" rx="4" ry="1.9" fill="#ff5a14"/>
<path d="M262.6 532.6 L272.4 539.2 L262.6 545.8 Z" fill="#10d820"/>
</svg>
<div class="abs" style="left:313.5px;top:505px;width:1064px;height:1px;background:#141406;"></div>
<div class="abs" style="left:211px;top:531.8px;width:1166.5px;height:1.4px;background:#202034;"></div>
<div class="abs" style="left:301px;top:117.2px;width:1076px;height:1px;background:#141406;"></div>
<div class="abs" style="left:1390.4px;top:85.5px;width:305.5px;height:48.2px;background:#4d5e5a;border-radius:5px;"></div>
<svg style="left:1650px;top:100px" width="18" height="16" viewBox="0 0 18 16"><path d="M1.4 1.8 L15.2 1.8 L8.3 14.4 Z" fill="#ececec"/></svg>
<div class="abs" style="left:1594.5px;top:140.5px;width:101.4px;height:60px;background:#4d5e5a;border-radius:0 7px 7px 0;"></div>
<div class="abs" style="left:1390.4px;top:140.5px;width:209.2px;height:704.6px;box-sizing:border-box;border:4.6px solid #4d5e5a;border-radius:6px;"></div>
<div class="abs" style="left:1397.3px;top:146.3px;width:195.4px;height:82.6px;box-sizing:border-box;background:#2e3650;border:2.2px solid #6494ee;border-radius:8px;"></div>
<div class="abs" style="left:1410.3px;top:214.8px;width:168.7px;height:1.6px;background:#6c685c;"></div>
<div class="btn" style="left:1400.6px;top:230.8px;width:189px;height:85.8px;border-radius:5px;"></div>
<div class="btn" style="left:1400.6px;top:322.6px;width:189px;height:86.3px;border-radius:5px;"></div>
<div class="btn" style="left:1400.6px;top:414.7px;width:189px;height:60.7px;border-radius:5px;"></div>
<div class="abs" style="left:1409.1px;top:271.6px;width:131px;height:36.6px;background:#c6c6c8;border-radius:18.3px;"></div>
<div class="abs" style="left:1409.1px;top:271.6px;width:65.8px;height:36.6px;background:#14b682;border-radius:18.3px;"></div>
<div class="abs" style="left:1409.1px;top:363.1px;width:131px;height:36.6px;background:#c6c6c8;border-radius:18.3px;"></div>
<div class="abs" style="left:1474.3px;top:363.1px;width:65.8px;height:36.6px;background:#14b682;border-radius:18.3px;"></div>
<div class="abs" style="left:1664.9px;top:811.2px;width:33px;height:33.5px;background:#323a54;border-radius:2px;"></div>
<svg style="left:1664.9px;top:811.2px" width="33" height="34" viewBox="0 0 33 34"><path d="M5.4 10.8 L11.8 16.6 L5.4 22.8" stroke="#f2f2f2" stroke-width="2" fill="none"/><path d="M12.2 9.9H30.7M15.8 17.1H30.7M12.2 24H30.7" stroke="#f2f2f2" stroke-width="2.1" fill="none"/></svg>
<svg style="left:0;top:0" width="1910" height="938" viewBox="0 0 1910 938">
<path d="M313.8 868 Q313.8 864.2 317.6 864.2 L385.2 864.2 Q389 864.2 389 868 L389 876 L445.6 876 Q449.6 876 449.6 880 L449.6 923.2 Q449.6 927.2 445.6 927.2 L317.8 927.2 Q313.8 927.2 313.8 923.2 Z" fill="#4d5e5a" stroke="#2ca682" stroke-width="2.2"/>
<path d="M389 876 L445.6 876 Q449.6 876 449.6 880 L449.6 887.4 L389 887.4 Z" fill="#14b488"/>
<path d="M314.9 887.4 L314.9 868 Q314.9 865.3 317.6 865.3 L385.2 865.3 Q387.9 865.3 387.9 868 L387.9 887.4 Z" fill="#000"/>
</svg>
<div class="abs" style="left:1307.8px;top:865.6px;width:60.4px;height:61.7px;box-sizing:border-box;background:#3a4258;border:1.4px solid #5d6474;border-radius:6px;"></div>
<svg style="left:1307.8px;top:865.6px" width="61" height="62" viewBox="0 0 61 62"><path d="M30.5 19.6V43.2M18.8 31.4H42.2" stroke="#e0e0e0" stroke-width="3.8" fill="none"/></svg>
<div class="abs" style="left:1390.6px;top:9.6px;width:93.6px;height:58.2px;box-sizing:border-box;background:#2e3650;border:1.3px solid #50586c;border-radius:6px;"></div>
<div class="abs" style="left:1489.3px;top:9.6px;width:95.1px;height:58.2px;box-sizing:border-box;background:#2e3650;border:1.3px solid #50586c;border-radius:6px;"></div>
<div class="abs" style="left:1589.3px;top:9.6px;width:94.7px;height:58.2px;box-sizing:border-box;background:#2e3650;border:1.3px solid #50586c;border-radius:6px;"></div>
<svg style="left:1420.3px;top:21.2px" width="35" height="35" viewBox="0 0 35 35">
<defs><linearGradient id="vg" x1="0" y1="0" x2="0" y2="1"><stop offset="0" stop-color="#3a4258"/><stop offset="1" stop-color="#6a6e72"/></linearGradient></defs>
<rect x="0.8" y="0.8" width="33.4" height="33.4" rx="3" fill="url(#vg)" stroke="#d8dce0" stroke-width="1.5"/>
<rect x="4.4" y="4.6" width="9.4" height="5.4" fill="none" stroke="#e6e6e6" stroke-width="1.3"/>
<rect x="21.2" y="4.6" width="9.4" height="5.4" fill="none" stroke="#e6e6e6" stroke-width="1.3"/>
<path d="M17.4 8.6V22.4M10.4 15.4H24.4" stroke="#ffffff" stroke-width="1.8" fill="none"/>
<text x="17.5" y="31.6" font-family="Liberation Sans, sans-serif" font-size="6.6" font-weight="700" fill="#e4e4e4" text-anchor="middle" textLength="18">VIEW</text>
</svg>
<span class="abs" style="left:1511.8px;top:17.6px;font:700 43px/1 'Liberation Sans', sans-serif;color:#fff;transform:scaleX(0.90);transform-origin:0 0;-webkit-text-stroke:1.3px #fff;">P</span>
<span class="abs" style="left:1539.6px;top:22.3px;font:700 19px/1 'Liberation Sans', sans-serif;color:#f0f0f0;transform:scaleX(0.95);transform-origin:0 0;">re</span>
<span class="abs" style="left:1533.4px;top:38.4px;font:700 19px/1 'Liberation Sans', sans-serif;color:#f0f0f0;transform:scaleX(0.95);transform-origin:0 0;">set</span>
<svg style="left:1616px;top:19px" width="42" height="38" viewBox="1616 19 42 38">
<path d="M1626.6 28.8 L1629.4 23.2 L1644 23.2 L1646.8 28.8" fill="none" stroke="#d8d8d8" stroke-width="1.6"/>
<rect x="1620.2" y="29.4" width="32.8" height="24" fill="#5c6068" stroke="#dcdcdc" stroke-width="1.7"/>
<circle cx="1636.5" cy="41.4" r="6.9" fill="#2f3752" stroke="#e0e0e0" stroke-width="1.6"/>
</svg>
<svg style="left:0;top:0" width="1910" height="938" viewBox="0 0 1910 938">
<defs>
<linearGradient id="gg" x1="0" y1="0" x2="1" y2="1"><stop offset="0" stop-color="#c8c8c0"/><stop offset="0.5" stop-color="#a8a8a8"/><stop offset="1" stop-color="#bcbcc0"/></linearGradient>
<radialGradient id="gi" cx="0.5" cy="0.5" r="0.6"><stop offset="0" stop-color="#3c3c38"/><stop offset="1" stop-color="#242422"/></radialGradient>
</defs>
<path d="M254.8 864.4 L255.1 864.4 L255.3 864.4 L255.6 864.3 L255.9 864.3 L256.2 864.2 L256.5 864.2 L256.7 864.1 L257.0 864.0 L257.3 863.8 L257.6 863.7 L257.9 863.6 L258.2 863.4 L258.5 863.2 L258.8 863.0 L259.1 862.8 L259.5 862.6 L259.8 862.3 L260.1 862.0 L260.5 861.7 L260.9 861.3 L261.3 860.9 L261.7 860.3 L262.3 859.0 L262.6 859.0 L262.9 859.1 L263.2 859.2 L263.6 859.2 L263.9 859.3 L264.2 859.4 L264.5 859.5 L264.8 859.6 L265.1 859.7 L265.5 859.7 L265.8 859.8 L266.1 859.9 L266.4 860.0 L266.7 860.1 L267.0 860.2 L267.3 860.4 L267.6 860.5 L267.9 860.6 L268.2 860.7 L268.5 860.8 L268.8 860.9 L269.2 861.1 L269.5 861.2 L269.8 861.3 L270.1 861.4 L270.4 861.6 L270.6 861.7 L270.9 861.9 L271.2 862.0 L271.5 862.1 L271.8 862.3 L272.1 862.4 L272.4 862.6 L272.7 862.7 L273.0 862.9 L273.3 863.1 L273.6 863.2 L273.8 863.4 L274.1 863.6 L274.4 863.7 L274.7 863.9 L274.9 864.1 L275.2 864.2 L275.5 864.4 L275.8 864.6 L276.0 864.8 L276.3 865.0 L276.6 865.2 L276.8 865.4 L277.1 865.6 L277.4 865.8 L277.6 865.9 L277.9 866.1 L278.1 866.4 L278.4 866.6 L278.7 866.8 L278.9 867.0 L279.2 867.2 L279.4 867.4 L279.6 867.6 L279.9 867.8 L280.1 868.1 L280.4 868.3 L280.6 868.5 L280.8 868.7 L281.1 869.0 L281.3 869.2 L281.5 869.4 L281.8 869.7 L282.0 869.9 L282.2 870.1 L282.4 870.4 L282.7 870.6 L282.9 870.9 L282.0 872.0 L281.7 872.7 L281.5 873.3 L281.4 873.8 L281.3 874.2 L281.2 874.7 L281.2 875.1 L281.1 875.5 L281.1 875.9 L281.1 876.3 L281.1 876.6 L281.1 877.0 L281.1 877.3 L281.1 877.6 L281.2 877.9 L281.2 878.2 L281.3 878.5 L281.4 878.8 L281.5 879.0 L281.5 879.3 L281.7 879.6 L281.8 879.8 L281.9 880.1 L282.0 880.3 L282.2 880.5 L282.4 880.7 L282.5 880.9 L282.7 881.2 L282.9 881.4 L283.2 881.6 L283.4 881.8 L283.6 881.9 L283.9 882.1 L284.2 882.3 L284.5 882.5 L284.8 882.7 L285.1 882.8 L285.4 883.0 L285.8 883.2 L286.2 883.3 L286.6 883.5 L287.1 883.6 L287.6 883.8 L288.2 883.9 L288.9 884.0 L290.4 883.8 L290.5 884.1 L290.6 884.4 L290.7 884.7 L290.8 885.0 L290.8 885.4 L290.9 885.7 L291.0 886.0 L291.1 886.3 L291.2 886.6 L291.3 886.9 L291.3 887.3 L291.4 887.6 L291.5 887.9 L291.5 888.2 L291.6 888.5 L291.7 888.9 L291.7 889.2 L291.8 889.5 L291.8 889.8 L291.9 890.2 L291.9 890.5 L292.0 890.8 L292.0 891.1 L292.1 891.5 L292.1 891.8 L292.1 892.1 L292.2 892.4 L292.2 892.8 L292.2 893.1 L292.2 893.4 L292.2 893.7 L292.3 894.1 L292.3 894.4 L292.3 894.7 L292.3 895.0 L292.3 895.4 L292.3 895.7 L292.3 896.0 L292.3 896.4 L292.3 896.7 L292.3 897.0 L292.3 897.3 L292.2 897.7 L292.2 898.0 L292.2 898.3 L292.2 898.6 L292.2 899.0 L292.1 899.3 L292.1 899.6 L292.1 899.9 L292.0 900.3 L292.0 900.6 L291.9 900.9 L291.9 901.2 L291.8 901.6 L291.8 901.9 L291.7 902.2 L291.7 902.5 L291.6 902.9 L291.5 903.2 L291.5 903.5 L291.4 903.8 L291.3 904.1 L291.3 904.5 L291.2 904.8 L291.1 905.1 L291.0 905.4 L290.9 905.7 L290.8 906.0 L290.8 906.4 L290.7 906.7 L290.6 907.0 L290.5 907.3 L290.4 907.6 L288.9 907.4 L288.2 907.5 L287.6 907.6 L287.1 907.8 L286.6 907.9 L286.2 908.1 L285.8 908.2 L285.4 908.4 L285.1 908.6 L284.8 908.7 L284.5 908.9 L284.2 909.1 L283.9 909.3 L283.6 909.5 L283.4 909.6 L283.2 909.8 L282.9 910.0 L282.7 910.2 L282.5 910.5 L282.4 910.7 L282.2 910.9 L282.0 911.1 L281.9 911.4 L281.8 911.6 L281.7 911.8 L281.5 912.1 L281.5 912.4 L281.4 912.6 L281.3 912.9 L281.2 913.2 L281.2 913.5 L281.1 913.8 L281.1 914.1 L281.1 914.4 L281.1 914.8 L281.1 915.1 L281.1 915.5 L281.1 915.9 L281.2 916.3 L281.2 916.7 L281.3 917.2 L281.4 917.6 L281.5 918.1 L281.7 918.7 L282.0 919.4 L282.9 920.5 L282.7 920.8 L282.4 921.0 L282.2 921.3 L282.0 921.5 L281.8 921.7 L281.5 922.0 L281.3 922.2 L281.1 922.4 L280.8 922.7 L280.6 922.9 L280.4 923.1 L280.1 923.3 L279.9 923.6 L279.6 923.8 L279.4 924.0 L279.2 924.2 L278.9 924.4 L278.7 924.6 L278.4 924.8 L278.1 925.0 L277.9 925.3 L277.6 925.5 L277.4 925.6 L277.1 925.8 L276.8 926.0 L276.6 926.2 L276.3 926.4 L276.0 926.6 L275.8 926.8 L275.5 927.0 L275.2 927.2 L274.9 927.3 L274.7 927.5 L274.4 927.7 L274.1 927.8 L273.8 928.0 L273.6 928.2 L273.3 928.3 L273.0 928.5 L272.7 928.7 L272.4 928.8 L272.1 929.0 L271.8 929.1 L271.5 929.3 L271.2 929.4 L270.9 929.5 L270.6 929.7 L270.4 929.8 L270.1 930.0 L269.8 930.1 L269.5 930.2 L269.2 930.3 L268.8 930.5 L268.5 930.6 L268.2 930.7 L267.9 930.8 L267.6 930.9 L267.3 931.0 L267.0 931.2 L266.7 931.3 L266.4 931.4 L266.1 931.5 L265.8 931.6 L265.5 931.7 L265.1 931.7 L264.8 931.8 L264.5 931.9 L264.2 932.0 L263.9 932.1 L263.6 932.2 L263.2 932.2 L262.9 932.3 L262.6 932.4 L262.3 932.4 L261.7 931.1 L261.3 930.5 L260.9 930.1 L260.5 929.7 L260.1 929.4 L259.8 929.1 L259.5 928.8 L259.1 928.6 L258.8 928.4 L258.5 928.2 L258.2 928.0 L257.9 927.8 L257.6 927.7 L257.3 927.6 L257.0 927.4 L256.7 927.3 L256.5 927.2 L256.2 927.2 L255.9 927.1 L255.6 927.1 L255.3 927.0 L255.1 927.0 L254.8 927.0 L254.5 927.0 L254.3 927.0 L254.0 927.1 L253.7 927.1 L253.4 927.2 L253.1 927.2 L252.9 927.3 L252.6 927.4 L252.3 927.6 L252.0 927.7 L251.7 927.8 L251.4 928.0 L251.1 928.2 L250.8 928.4 L250.5 928.6 L250.1 928.8 L249.8 929.1 L249.5 929.4 L249.1 929.7 L248.7 930.1 L248.3 930.5 L247.9 931.1 L247.3 932.4 L247.0 932.4 L246.7 932.3 L246.4 932.2 L246.0 932.2 L245.7 932.1 L245.4 932.0 L245.1 931.9 L244.8 931.8 L244.5 931.7 L244.1 931.7 L243.8 931.6 L243.5 931.5 L243.2 931.4 L242.9 931.3 L242.6 931.2 L242.3 931.0 L242.0 930.9 L241.7 930.8 L241.4 930.7 L241.1 930.6 L240.8 930.5 L240.4 930.3 L240.1 930.2 L239.8 930.1 L239.5 930.0 L239.2 929.8 L239.0 929.7 L238.7 929.5 L238.4 929.4 L238.1 929.3 L237.8 929.1 L237.5 929.0 L237.2 928.8 L236.9 928.7 L236.6 928.5 L236.3 928.3 L236.1 928.2 L235.8 928.0 L235.5 927.8 L235.2 927.7 L234.9 927.5 L234.7 927.3 L234.4 927.2 L234.1 927.0 L233.8 926.8 L233.6 926.6 L233.3 926.4 L233.0 926.2 L232.8 926.0 L232.5 925.8 L232.2 925.6 L232.0 925.5 L231.7 925.3 L231.5 925.0 L231.2 924.8 L230.9 924.6 L230.7 924.4 L230.4 924.2 L230.2 924.0 L230.0 923.8 L229.7 923.6 L229.5 923.3 L229.2 923.1 L229.0 922.9 L228.8 922.7 L228.5 922.4 L228.3 922.2 L228.1 922.0 L227.8 921.7 L227.6 921.5 L227.4 921.3 L227.2 921.0 L226.9 920.8 L226.7 920.5 L227.6 919.4 L227.9 918.7 L228.1 918.1 L228.2 917.6 L228.3 917.2 L228.4 916.7 L228.4 916.3 L228.5 915.9 L228.5 915.5 L228.5 915.1 L228.5 914.8 L228.5 914.4 L228.5 914.1 L228.5 913.8 L228.4 913.5 L228.4 913.2 L228.3 912.9 L228.2 912.6 L228.1 912.4 L228.1 912.1 L227.9 911.8 L227.8 911.6 L227.7 911.4 L227.6 911.1 L227.4 910.9 L227.2 910.7 L227.1 910.5 L226.9 910.2 L226.7 910.0 L226.4 909.8 L226.2 909.6 L226.0 909.5 L225.7 909.3 L225.4 909.1 L225.1 908.9 L224.8 908.7 L224.5 908.6 L224.2 908.4 L223.8 908.2 L223.4 908.1 L223.0 907.9 L222.5 907.8 L222.0 907.6 L221.4 907.5 L220.7 907.4 L219.2 907.6 L219.1 907.3 L219.0 907.0 L218.9 906.7 L218.8 906.4 L218.8 906.0 L218.7 905.7 L218.6 905.4 L218.5 905.1 L218.4 904.8 L218.3 904.5 L218.3 904.1 L218.2 903.8 L218.1 903.5 L218.1 903.2 L218.0 902.9 L217.9 902.5 L217.9 902.2 L217.8 901.9 L217.8 901.6 L217.7 901.2 L217.7 900.9 L217.6 900.6 L217.6 900.3 L217.5 899.9 L217.5 899.6 L217.5 899.3 L217.4 899.0 L217.4 898.6 L217.4 898.3 L217.4 898.0 L217.4 897.7 L217.3 897.3 L217.3 897.0 L217.3 896.7 L217.3 896.4 L217.3 896.0 L217.3 895.7 L217.3 895.4 L217.3 895.0 L217.3 894.7 L217.3 894.4 L217.3 894.1 L217.4 893.7 L217.4 893.4 L217.4 893.1 L217.4 892.8 L217.4 892.4 L217.5 892.1 L217.5 891.8 L217.5 891.5 L217.6 891.1 L217.6 890.8 L217.7 890.5 L217.7 890.2 L217.8 889.8 L217.8 889.5 L217.9 889.2 L217.9 888.9 L218.0 888.5 L218.1 888.2 L218.1 887.9 L218.2 887.6 L218.3 887.3 L218.3 886.9 L218.4 886.6 L218.5 886.3 L218.6 886.0 L218.7 885.7 L218.8 885.4 L218.8 885.0 L218.9 884.7 L219.0 884.4 L219.1 884.1 L219.2 883.8 L220.7 884.0 L221.4 883.9 L222.0 883.8 L222.5 883.6 L223.0 883.5 L223.4 883.3 L223.8 883.2 L224.2 883.0 L224.5 882.8 L224.8 882.7 L225.1 882.5 L225.4 882.3 L225.7 882.1 L226.0 881.9 L226.2 881.8 L226.4 881.6 L226.7 881.4 L226.9 881.2 L227.1 880.9 L227.2 880.7 L227.4 880.5 L227.6 880.3 L227.7 880.1 L227.8 879.8 L227.9 879.6 L228.1 879.3 L228.1 879.0 L228.2 878.8 L228.3 878.5 L228.4 878.2 L228.4 877.9 L228.5 877.6 L228.5 877.3 L228.5 877.0 L228.5 876.6 L228.5 876.3 L228.5 875.9 L228.5 875.5 L228.4 875.1 L228.4 874.7 L228.3 874.2 L228.2 873.8 L228.1 873.3 L227.9 872.7 L227.6 872.0 L226.7 870.9 L226.9 870.6 L227.2 870.4 L227.4 870.1 L227.6 869.9 L227.8 869.7 L228.1 869.4 L228.3 869.2 L228.5 869.0 L228.8 868.7 L229.0 868.5 L229.2 868.3 L229.5 868.1 L229.7 867.8 L230.0 867.6 L230.2 867.4 L230.4 867.2 L230.7 867.0 L230.9 866.8 L231.2 866.6 L231.5 866.4 L231.7 866.1 L232.0 865.9 L232.2 865.8 L232.5 865.6 L232.8 865.4 L233.0 865.2 L233.3 865.0 L233.6 864.8 L233.8 864.6 L234.1 864.4 L234.4 864.2 L234.7 864.1 L234.9 863.9 L235.2 863.7 L235.5 863.6 L235.8 863.4 L236.0 863.2 L236.3 863.1 L236.6 862.9 L236.9 862.7 L237.2 862.6 L237.5 862.4 L237.8 862.3 L238.1 862.1 L238.4 862.0 L238.7 861.9 L239.0 861.7 L239.2 861.6 L239.5 861.4 L239.8 861.3 L240.1 861.2 L240.4 861.1 L240.8 860.9 L241.1 860.8 L241.4 860.7 L241.7 860.6 L242.0 860.5 L242.3 860.4 L242.6 860.2 L242.9 860.1 L243.2 860.0 L243.5 859.9 L243.8 859.8 L244.1 859.7 L244.5 859.7 L244.8 859.6 L245.1 859.5 L245.4 859.4 L245.7 859.3 L246.0 859.2 L246.4 859.2 L246.7 859.1 L247.0 859.0 L247.3 859.0 L247.9 860.3 L248.3 860.9 L248.7 861.3 L249.1 861.7 L249.5 862.0 L249.8 862.3 L250.1 862.6 L250.5 862.8 L250.8 863.0 L251.1 863.2 L251.4 863.4 L251.7 863.6 L252.0 863.7 L252.3 863.8 L252.6 864.0 L252.9 864.1 L253.1 864.2 L253.4 864.2 L253.7 864.3 L254.0 864.3 L254.3 864.4 L254.5 864.4 Z" fill="url(#gg)"/>
<path d="M254.8 870.2 L255.0 870.2 L255.2 870.2 L255.5 870.2 L255.7 870.1 L255.9 870.1 L256.1 870.1 L256.4 870.0 L256.6 870.0 L256.8 869.9 L257.1 869.9 L257.3 869.8 L257.5 869.7 L257.8 869.6 L258.0 869.5 L258.3 869.4 L258.5 869.3 L258.8 869.2 L259.0 869.1 L259.3 869.0 L259.5 868.8 L259.8 868.7 L260.1 868.6 L260.4 868.4 L260.6 868.2 L260.9 868.0 L261.2 867.8 L261.6 867.5 L261.9 867.1 L262.2 867.1 L262.4 867.2 L262.7 867.3 L262.9 867.3 L263.2 867.4 L263.4 867.5 L263.7 867.6 L263.9 867.6 L264.2 867.7 L264.4 867.8 L264.6 867.9 L264.9 868.0 L265.1 868.1 L265.4 868.2 L265.6 868.3 L265.9 868.3 L266.1 868.4 L266.3 868.5 L266.6 868.6 L266.8 868.8 L267.0 868.9 L267.3 869.0 L267.5 869.1 L267.7 869.2 L268.0 869.3 L268.2 869.4 L268.4 869.5 L268.6 869.7 L268.9 869.8 L269.1 869.9 L269.3 870.0 L269.6 870.2 L269.8 870.3 L270.0 870.4 L270.2 870.5 L270.4 870.7 L270.7 870.8 L270.9 871.0 L271.1 871.1 L271.3 871.2 L271.5 871.4 L271.7 871.5 L271.9 871.7 L272.1 871.8 L272.3 872.0 L272.6 872.1 L272.8 872.3 L273.0 872.5 L273.2 872.6 L273.4 872.8 L273.6 872.9 L273.8 873.1 L274.0 873.3 L274.2 873.4 L274.3 873.6 L274.5 873.8 L274.7 874.0 L274.9 874.1 L275.1 874.3 L275.3 874.5 L275.5 874.7 L275.7 874.8 L275.8 875.0 L276.0 875.2 L275.8 875.8 L275.7 876.2 L275.7 876.5 L275.7 876.9 L275.7 877.2 L275.7 877.6 L275.7 877.9 L275.7 878.2 L275.7 878.5 L275.7 878.8 L275.8 879.0 L275.8 879.3 L275.8 879.6 L275.9 879.8 L275.9 880.1 L275.9 880.3 L276.0 880.6 L276.0 880.8 L276.1 881.1 L276.2 881.3 L276.2 881.5 L276.3 881.7 L276.4 881.9 L276.5 882.1 L276.6 882.4 L276.7 882.6 L276.8 882.8 L276.9 883.0 L277.0 883.1 L277.1 883.3 L277.2 883.5 L277.4 883.7 L277.5 883.9 L277.7 884.1 L277.8 884.2 L278.0 884.4 L278.1 884.6 L278.3 884.7 L278.5 884.9 L278.7 885.1 L278.9 885.2 L279.1 885.4 L279.3 885.6 L279.5 885.7 L279.7 885.9 L279.9 886.0 L280.2 886.2 L280.4 886.4 L280.7 886.5 L281.0 886.7 L281.2 886.9 L281.5 887.0 L281.8 887.2 L282.2 887.3 L282.6 887.5 L283.2 887.6 L283.2 887.8 L283.3 888.1 L283.4 888.3 L283.4 888.6 L283.5 888.8 L283.5 889.1 L283.6 889.3 L283.7 889.6 L283.7 889.8 L283.8 890.1 L283.8 890.3 L283.9 890.6 L283.9 890.8 L283.9 891.1 L284.0 891.3 L284.0 891.6 L284.0 891.8 L284.1 892.1 L284.1 892.4 L284.1 892.6 L284.2 892.9 L284.2 893.1 L284.2 893.4 L284.2 893.6 L284.2 893.9 L284.3 894.2 L284.3 894.4 L284.3 894.7 L284.3 894.9 L284.3 895.2 L284.3 895.4 L284.3 895.7 L284.3 896.0 L284.3 896.2 L284.3 896.5 L284.3 896.7 L284.3 897.0 L284.3 897.2 L284.2 897.5 L284.2 897.8 L284.2 898.0 L284.2 898.3 L284.2 898.5 L284.1 898.8 L284.1 899.0 L284.1 899.3 L284.0 899.6 L284.0 899.8 L284.0 900.1 L283.9 900.3 L283.9 900.6 L283.9 900.8 L283.8 901.1 L283.8 901.3 L283.7 901.6 L283.7 901.8 L283.6 902.1 L283.5 902.3 L283.5 902.6 L283.4 902.8 L283.4 903.1 L283.3 903.3 L283.2 903.6 L283.2 903.8 L282.6 903.9 L282.2 904.1 L281.8 904.2 L281.5 904.4 L281.2 904.5 L281.0 904.7 L280.7 904.9 L280.4 905.0 L280.2 905.2 L279.9 905.4 L279.7 905.5 L279.5 905.7 L279.3 905.8 L279.1 906.0 L278.9 906.2 L278.7 906.3 L278.5 906.5 L278.3 906.7 L278.1 906.8 L278.0 907.0 L277.8 907.2 L277.7 907.3 L277.5 907.5 L277.4 907.7 L277.2 907.9 L277.1 908.1 L277.0 908.3 L276.9 908.5 L276.8 908.6 L276.7 908.8 L276.6 909.0 L276.5 909.3 L276.4 909.5 L276.3 909.7 L276.2 909.9 L276.2 910.1 L276.1 910.3 L276.0 910.6 L276.0 910.8 L275.9 911.1 L275.9 911.3 L275.9 911.6 L275.8 911.8 L275.8 912.1 L275.8 912.4 L275.7 912.6 L275.7 912.9 L275.7 913.2 L275.7 913.5 L275.7 913.8 L275.7 914.2 L275.7 914.5 L275.7 914.9 L275.7 915.2 L275.8 915.6 L276.0 916.2 L275.8 916.4 L275.7 916.6 L275.5 916.7 L275.3 916.9 L275.1 917.1 L274.9 917.3 L274.7 917.4 L274.5 917.6 L274.3 917.8 L274.2 918.0 L274.0 918.1 L273.8 918.3 L273.6 918.5 L273.4 918.6 L273.2 918.8 L273.0 918.9 L272.8 919.1 L272.6 919.3 L272.3 919.4 L272.1 919.6 L271.9 919.7 L271.7 919.9 L271.5 920.0 L271.3 920.2 L271.1 920.3 L270.9 920.4 L270.7 920.6 L270.4 920.7 L270.2 920.9 L270.0 921.0 L269.8 921.1 L269.6 921.2 L269.3 921.4 L269.1 921.5 L268.9 921.6 L268.6 921.7 L268.4 921.9 L268.2 922.0 L268.0 922.1 L267.7 922.2 L267.5 922.3 L267.3 922.4 L267.0 922.5 L266.8 922.6 L266.6 922.8 L266.3 922.9 L266.1 923.0 L265.9 923.1 L265.6 923.1 L265.4 923.2 L265.1 923.3 L264.9 923.4 L264.6 923.5 L264.4 923.6 L264.2 923.7 L263.9 923.8 L263.7 923.8 L263.4 923.9 L263.2 924.0 L262.9 924.1 L262.7 924.1 L262.4 924.2 L262.2 924.3 L261.9 924.3 L261.6 923.9 L261.2 923.6 L260.9 923.4 L260.6 923.2 L260.4 923.0 L260.1 922.8 L259.8 922.7 L259.5 922.6 L259.3 922.4 L259.0 922.3 L258.8 922.2 L258.5 922.1 L258.3 922.0 L258.0 921.9 L257.8 921.8 L257.5 921.7 L257.3 921.6 L257.1 921.5 L256.8 921.5 L256.6 921.4 L256.4 921.4 L256.1 921.3 L255.9 921.3 L255.7 921.3 L255.5 921.2 L255.2 921.2 L255.0 921.2 L254.8 921.2 L254.6 921.2 L254.4 921.2 L254.1 921.2 L253.9 921.3 L253.7 921.3 L253.5 921.3 L253.2 921.4 L253.0 921.4 L252.8 921.5 L252.5 921.5 L252.3 921.6 L252.1 921.7 L251.8 921.8 L251.6 921.9 L251.3 922.0 L251.1 922.1 L250.8 922.2 L250.6 922.3 L250.3 922.4 L250.1 922.6 L249.8 922.7 L249.5 922.8 L249.2 923.0 L249.0 923.2 L248.7 923.4 L248.4 923.6 L248.0 923.9 L247.7 924.3 L247.4 924.3 L247.2 924.2 L246.9 924.1 L246.7 924.1 L246.4 924.0 L246.2 923.9 L245.9 923.8 L245.7 923.8 L245.4 923.7 L245.2 923.6 L245.0 923.5 L244.7 923.4 L244.5 923.3 L244.2 923.2 L244.0 923.1 L243.7 923.1 L243.5 923.0 L243.3 922.9 L243.0 922.8 L242.8 922.6 L242.6 922.5 L242.3 922.4 L242.1 922.3 L241.9 922.2 L241.6 922.1 L241.4 922.0 L241.2 921.9 L241.0 921.7 L240.7 921.6 L240.5 921.5 L240.3 921.4 L240.1 921.2 L239.8 921.1 L239.6 921.0 L239.4 920.9 L239.2 920.7 L238.9 920.6 L238.7 920.4 L238.5 920.3 L238.3 920.2 L238.1 920.0 L237.9 919.9 L237.7 919.7 L237.5 919.6 L237.3 919.4 L237.0 919.3 L236.8 919.1 L236.6 918.9 L236.4 918.8 L236.2 918.6 L236.0 918.5 L235.8 918.3 L235.6 918.1 L235.4 918.0 L235.3 917.8 L235.1 917.6 L234.9 917.4 L234.7 917.3 L234.5 917.1 L234.3 916.9 L234.1 916.7 L233.9 916.6 L233.8 916.4 L233.6 916.2 L233.8 915.6 L233.9 915.2 L233.9 914.9 L233.9 914.5 L233.9 914.2 L233.9 913.8 L233.9 913.5 L233.9 913.2 L233.9 912.9 L233.9 912.6 L233.8 912.4 L233.8 912.1 L233.8 911.8 L233.7 911.6 L233.7 911.3 L233.7 911.1 L233.6 910.8 L233.6 910.6 L233.5 910.3 L233.4 910.1 L233.4 909.9 L233.3 909.7 L233.2 909.5 L233.1 909.3 L233.0 909.0 L232.9 908.8 L232.8 908.6 L232.7 908.5 L232.6 908.3 L232.5 908.1 L232.4 907.9 L232.2 907.7 L232.1 907.5 L231.9 907.3 L231.8 907.2 L231.6 907.0 L231.5 906.8 L231.3 906.7 L231.1 906.5 L230.9 906.3 L230.7 906.2 L230.5 906.0 L230.3 905.8 L230.1 905.7 L229.9 905.5 L229.7 905.4 L229.4 905.2 L229.2 905.0 L228.9 904.9 L228.6 904.7 L228.4 904.5 L228.1 904.4 L227.8 904.2 L227.4 904.1 L227.0 903.9 L226.4 903.8 L226.4 903.6 L226.3 903.3 L226.2 903.1 L226.2 902.8 L226.1 902.6 L226.1 902.3 L226.0 902.1 L225.9 901.8 L225.9 901.6 L225.8 901.3 L225.8 901.1 L225.7 900.8 L225.7 900.6 L225.7 900.3 L225.6 900.1 L225.6 899.8 L225.6 899.6 L225.5 899.3 L225.5 899.0 L225.5 898.8 L225.4 898.5 L225.4 898.3 L225.4 898.0 L225.4 897.8 L225.4 897.5 L225.3 897.2 L225.3 897.0 L225.3 896.7 L225.3 896.5 L225.3 896.2 L225.3 896.0 L225.3 895.7 L225.3 895.4 L225.3 895.2 L225.3 894.9 L225.3 894.7 L225.3 894.4 L225.3 894.2 L225.4 893.9 L225.4 893.6 L225.4 893.4 L225.4 893.1 L225.4 892.9 L225.5 892.6 L225.5 892.4 L225.5 892.1 L225.6 891.8 L225.6 891.6 L225.6 891.3 L225.7 891.1 L225.7 890.8 L225.7 890.6 L225.8 890.3 L225.8 890.1 L225.9 889.8 L225.9 889.6 L226.0 889.3 L226.1 889.1 L226.1 888.8 L226.2 888.6 L226.2 888.3 L226.3 888.1 L226.4 887.8 L226.4 887.6 L227.0 887.5 L227.4 887.3 L227.8 887.2 L228.1 887.0 L228.4 886.9 L228.6 886.7 L228.9 886.5 L229.2 886.4 L229.4 886.2 L229.7 886.0 L229.9 885.9 L230.1 885.7 L230.3 885.6 L230.5 885.4 L230.7 885.2 L230.9 885.1 L231.1 884.9 L231.3 884.7 L231.5 884.6 L231.6 884.4 L231.8 884.2 L231.9 884.1 L232.1 883.9 L232.2 883.7 L232.4 883.5 L232.5 883.3 L232.6 883.1 L232.7 883.0 L232.8 882.8 L232.9 882.6 L233.0 882.4 L233.1 882.1 L233.2 881.9 L233.3 881.7 L233.4 881.5 L233.4 881.3 L233.5 881.1 L233.6 880.8 L233.6 880.6 L233.7 880.3 L233.7 880.1 L233.7 879.8 L233.8 879.6 L233.8 879.3 L233.8 879.0 L233.9 878.8 L233.9 878.5 L233.9 878.2 L233.9 877.9 L233.9 877.6 L233.9 877.2 L233.9 876.9 L233.9 876.5 L233.9 876.2 L233.8 875.8 L233.6 875.2 L233.8 875.0 L233.9 874.8 L234.1 874.7 L234.3 874.5 L234.5 874.3 L234.7 874.1 L234.9 874.0 L235.1 873.8 L235.3 873.6 L235.4 873.4 L235.6 873.3 L235.8 873.1 L236.0 872.9 L236.2 872.8 L236.4 872.6 L236.6 872.5 L236.8 872.3 L237.0 872.1 L237.3 872.0 L237.5 871.8 L237.7 871.7 L237.9 871.5 L238.1 871.4 L238.3 871.2 L238.5 871.1 L238.7 871.0 L238.9 870.8 L239.2 870.7 L239.4 870.5 L239.6 870.4 L239.8 870.3 L240.1 870.2 L240.3 870.0 L240.5 869.9 L240.7 869.8 L241.0 869.7 L241.2 869.5 L241.4 869.4 L241.6 869.3 L241.9 869.2 L242.1 869.1 L242.3 869.0 L242.6 868.9 L242.8 868.8 L243.0 868.6 L243.3 868.5 L243.5 868.4 L243.7 868.3 L244.0 868.3 L244.2 868.2 L244.5 868.1 L244.7 868.0 L245.0 867.9 L245.2 867.8 L245.4 867.7 L245.7 867.6 L245.9 867.6 L246.2 867.5 L246.4 867.4 L246.7 867.3 L246.9 867.3 L247.2 867.2 L247.4 867.1 L247.7 867.1 L248.0 867.5 L248.4 867.8 L248.7 868.0 L249.0 868.2 L249.2 868.4 L249.5 868.6 L249.8 868.7 L250.1 868.8 L250.3 869.0 L250.6 869.1 L250.8 869.2 L251.1 869.3 L251.3 869.4 L251.6 869.5 L251.8 869.6 L252.1 869.7 L252.3 869.8 L252.5 869.9 L252.8 869.9 L253.0 870.0 L253.2 870.0 L253.5 870.1 L253.7 870.1 L253.9 870.1 L254.1 870.2 L254.4 870.2 L254.6 870.2 Z" fill="url(#gi)"/>
<text x="255.10000000000002" y="909.3000000000001" font-family="Liberation Sans, sans-serif" font-size="40" font-weight="700" fill="#74746e" text-anchor="middle" opacity="0.85">R</text>
<path d="M241.5 881 H264 L269 886" stroke="#9a9a94" stroke-width="1.6" fill="none" opacity="0.8"/>
</svg>
<span class="abs" style="left:1511.3px;top:869.6px;font:italic 700 23.5px/1 'Liberation Sans', sans-serif;color:#f2f2f2;letter-spacing:-1.6px;transform:scaleX(0.86);transform-origin:0 0;">LXI</span>
<svg style="left:1549px;top:868px" width="28" height="26" viewBox="1549 868 28 26">
<path d="M1560.6 871.4 L1551.2 880.6 L1560.6 890" fill="none" stroke="#e4e4e4" stroke-width="1.4" stroke-linejoin="round"/>
<ellipse cx="1560.9" cy="880.7" rx="2.7" ry="9.3" fill="none" stroke="#e4e4e4" stroke-width="1.4"/>
<path d="M1557.4 874.8 V886.6" stroke="#d8d8d8" stroke-width="1.1"/>
<path d="M1565.7 877.5 L1573.7 886.2 M1573.7 877.5 L1565.7 886.2" stroke="#e8e8e8" stroke-width="1.4"/>
</svg>

<div id="texts">
<span id="t0" style="position:absolute;top:11.91px;left:397.00px;transform-origin:0 50%;font:400 17px/1 'Liberation Sans', sans-serif;color:#e2e2e2;white-space:pre;transform:scaleX(0.9542);">Input Z:</span>
<span id="t1" style="position:absolute;top:30.30px;left:397.00px;transform-origin:0 50%;font:400 17px/1 'Liberation Sans', sans-serif;color:#e2e2e2;white-space:pre;transform:scaleX(0.9821);">Corrections:</span>
<span id="t2" style="position:absolute;top:49.30px;left:397.00px;transform-origin:0 50%;font:400 17px/1 'Liberation Sans', sans-serif;color:#e2e2e2;white-space:pre;transform:scaleX(0.9267);">Ext Gain:</span>
<span id="t3" style="position:absolute;top:11.91px;right:1333.60px;transform-origin:100% 50%;font:400 17px/1 'Liberation Sans', sans-serif;color:#e2e2e2;white-space:pre;transform:scaleX(0.9025);">50 Ω</span>
<span id="t4" style="position:absolute;top:30.30px;right:1333.60px;transform-origin:100% 50%;font:400 17px/1 'Liberation Sans', sans-serif;color:#e2e2e2;white-space:pre;transform:scaleX(0.8647);">OFF</span>
<span id="t5" style="position:absolute;top:49.30px;right:1333.60px;transform-origin:100% 50%;font:400 17px/1 'Liberation Sans', sans-serif;color:#e2e2e2;white-space:pre;transform:scaleX(0.9623);">0.00 dB</span>
<span id="t6" style="position:absolute;top:11.91px;left:596.10px;transform-origin:0 50%;font:400 17px/1 'Liberation Sans', sans-serif;color:#e2e2e2;white-space:pre;transform:scaleX(0.9300);">PA:</span>
<span id="t7" style="position:absolute;top:30.30px;left:596.10px;transform-origin:0 50%;font:400 17px/1 'Liberation Sans', sans-serif;color:#e2e2e2;white-space:pre;transform:scaleX(0.9300);">Att:</span>
<span id="t8" style="position:absolute;top:49.30px;left:596.10px;transform-origin:0 50%;font:400 17px/1 'Liberation Sans', sans-serif;color:#e2e2e2;white-space:pre;transform:scaleX(0.9300);">Align:</span>
<span id="t9" style="position:absolute;top:11.91px;right:1133.60px;transform-origin:100% 50%;font:400 17px/1 'Liberation Sans', sans-serif;color:#e2e2e2;white-space:pre;transform:scaleX(0.9300);">OFF</span>
<span id="t10" style="position:absolute;top:30.30px;right:1133.60px;transform-origin:100% 50%;font:400 17px/1 'Liberation Sans', sans-serif;color:#e2e2e2;white-space:pre;transform:scaleX(0.9300);">10.00 dB</span>
<span id="t11" style="position:absolute;top:49.30px;right:1133.60px;transform-origin:100% 50%;font:400 17px/1 'Liberation Sans', sans-serif;color:#e2e2e2;white-space:pre;transform:scaleX(0.9300);">Manual</span>
<span id="t12" style="position:absolute;top:15.30px;left:795.50px;transform-origin:0 50%;font:400 17px/1 'Liberation Sans', sans-serif;color:#e2e2e2;white-space:pre;transform:scaleX(0.9642);">Swp Mode:</span>
<span id="t13" style="position:absolute;top:45.30px;left:795.50px;transform-origin:0 50%;font:400 17px/1 'Liberation Sans', sans-serif;color:#e2e2e2;white-space:pre;transform:scaleX(0.9300);">100% POI:</span>
<span id="t14" style="position:absolute;top:15.30px;right:934.20px;transform-origin:100% 50%;font:400 17px/1 'Liberation Sans', sans-serif;color:#e2e2e2;white-space:pre;transform:scaleX(0.9300);">Cont</span>
<span id="t15" style="position:absolute;top:45.30px;right:934.20px;transform-origin:100% 50%;font:400 17px/1 'Liberation Sans', sans-serif;color:#e2e2e2;white-space:pre;transform:scaleX(0.9807);">7.723 μs</span>
<span id="t16" style="position:absolute;top:15.30px;left:995.50px;transform-origin:0 50%;font:400 17px/1 'Liberation Sans', sans-serif;color:#e2e2e2;white-space:pre;transform:scaleX(0.9300);">CF:</span>
<span id="t17" style="position:absolute;top:45.30px;left:995.50px;transform-origin:0 50%;font:400 17px/1 'Liberation Sans', sans-serif;color:#e2e2e2;white-space:pre;transform:scaleX(0.9300);">Trig:</span>
<span id="t18" style="position:absolute;top:15.30px;right:734.20px;transform-origin:100% 50%;font:400 17px/1 'Liberation Sans', sans-serif;color:#e2e2e2;white-space:pre;transform:scaleX(0.9783);">4.960000000 GHz</span>
<span id="t19" style="position:absolute;top:45.30px;right:734.20px;transform-origin:100% 50%;font:400 17px/1 'Liberation Sans', sans-serif;color:#e2e2e2;white-space:pre;transform:scaleX(0.9300);">Free Run</span>
<span id="t20" style="position:absolute;top:9.61px;right:667.20px;transform-origin:100% 50%;font:400 17px/1 'Liberation Sans', sans-serif;color:#e2e2e2;white-space:pre;transform:scaleX(0.9300);">Trace:</span>
<span id="t21" style="position:absolute;top:29.61px;right:667.20px;transform-origin:100% 50%;font:400 17px/1 'Liberation Sans', sans-serif;color:#e2e2e2;white-space:pre;transform:scaleX(0.9300);">Type:</span>
<span id="t22" style="position:absolute;top:50.52px;right:667.20px;transform-origin:100% 50%;font:400 17px/1 'Liberation Sans', sans-serif;color:#e2e2e2;white-space:pre;transform:scaleX(0.9300);">Det:</span>
<span id="t23" style="position:absolute;top:9.61px;left:1257.40px;transform-origin:50% 50%;font:400 17px/1 'Liberation Sans', sans-serif;color:#000000;white-space:pre;transform:translateX(-50%) scaleX(0.9300);">1</span>
<span id="t24" style="position:absolute;top:29.61px;left:1257.40px;transform-origin:50% 50%;font:400 17px/1 'Liberation Sans', sans-serif;color:#28b4d4;white-space:pre;transform:translateX(-50%) scaleX(0.9300);">W</span>
<span id="t25" style="position:absolute;top:50.52px;left:1257.40px;transform-origin:50% 50%;font:400 17px/1 'Liberation Sans', sans-serif;color:#1cb4cc;white-space:pre;transform:translateX(-50%) scaleX(0.9300);">P</span>
<span id="t26" style="position:absolute;top:9.61px;left:1277.90px;transform-origin:50% 50%;font:400 17px/1 'Liberation Sans', sans-serif;color:#2a7cf0;white-space:pre;transform:translateX(-50%) scaleX(0.9300);">2</span>
<span id="t27" style="position:absolute;top:29.61px;left:1277.90px;transform-origin:50% 50%;font:400 17px/1 'Liberation Sans', sans-serif;color:#8a8a84;white-space:pre;transform:translateX(-50%) scaleX(0.9300);text-decoration:line-through;text-decoration-thickness:1px;">W</span>
<span id="t28" style="position:absolute;top:50.52px;left:1277.90px;transform-origin:50% 50%;font:400 17px/1 'Liberation Sans', sans-serif;color:#1cb4cc;white-space:pre;transform:translateX(-50%) scaleX(0.9300);">P</span>
<span id="t29" style="position:absolute;top:9.61px;left:1299.00px;transform-origin:50% 50%;font:400 17px/1 'Liberation Sans', sans-serif;color:#22c822;white-space:pre;transform:translateX(-50%) scaleX(0.9300);">3</span>
<span id="t30" style="position:absolute;top:29.61px;left:1299.00px;transform-origin:50% 50%;font:400 17px/1 'Liberation Sans', sans-serif;color:#8a8a84;white-space:pre;transform:translateX(-50%) scaleX(0.9300);text-decoration:line-through;text-decoration-thickness:1px;">W</span>
<span id="t31" style="position:absolute;top:50.52px;left:1299.00px;transform-origin:50% 50%;font:400 17px/1 'Liberation Sans', sans-serif;color:#1cb4cc;white-space:pre;transform:translateX(-50%) scaleX(0.9300);">P</span>
<span id="t32" style="position:absolute;top:9.61px;left:1319.90px;transform-origin:50% 50%;font:400 17px/1 'Liberation Sans', sans-serif;color:#ff38ff;white-space:pre;transform:translateX(-50%) scaleX(0.9300);">4</span>
<span id="t33" style="position:absolute;top:29.61px;left:1319.90px;transform-origin:50% 50%;font:400 17px/1 'Liberation Sans', sans-serif;color:#8a8a84;white-space:pre;transform:translateX(-50%) scaleX(0.9300);text-decoration:line-through;text-decoration-thickness:1px;">W</span>
<span id="t34" style="position:absolute;top:50.52px;left:1319.90px;transform-origin:50% 50%;font:400 17px/1 'Liberation Sans', sans-serif;color:#1cb4cc;white-space:pre;transform:translateX(-50%) scaleX(0.9300);">P</span>
<span id="t35" style="position:absolute;top:9.61px;left:1341.30px;transform-origin:50% 50%;font:400 17px/1 'Liberation Sans', sans-serif;color:#28c8f0;white-space:pre;transform:translateX(-50%) scaleX(0.9300);">5</span>
<span id="t36" style="position:absolute;top:29.61px;left:1341.30px;transform-origin:50% 50%;font:400 17px/1 'Liberation Sans', sans-serif;color:#8a8a84;white-space:pre;transform:translateX(-50%) scaleX(0.9300);text-decoration:line-through;text-decoration-thickness:1px;">W</span>
<span id="t37" style="position:absolute;top:50.52px;left:1341.30px;transform-origin:50% 50%;font:400 17px/1 'Liberation Sans', sans-serif;color:#1cb4cc;white-space:pre;transform:translateX(-50%) scaleX(0.9300);">P</span>
<span id="t38" style="position:absolute;top:9.61px;left:1362.60px;transform-origin:50% 50%;font:400 17px/1 'Liberation Sans', sans-serif;color:#ff8c1e;white-space:pre;transform:translateX(-50%) scaleX(0.9300);">6</span>
<span id="t39" style="position:absolute;top:29.61px;left:1362.60px;transform-origin:50% 50%;font:400 17px/1 'Liberation Sans', sans-serif;color:#8a8a84;white-space:pre;transform:translateX(-50%) scaleX(0.9300);text-decoration:line-through;text-decoration-thickness:1px;">W</span>
<span id="t40" style="position:absolute;top:50.52px;left:1362.60px;transform-origin:50% 50%;font:400 17px/1 'Liberation Sans', sans-serif;color:#1cb4cc;white-space:pre;transform:translateX(-50%) scaleX(0.9300);">P</span>
<span id="t41" style="position:absolute;top:90.30px;left:217.00px;transform-origin:0 50%;font:400 18px/1 'Liberation Sans', sans-serif;color:#e2e2e2;white-space:pre;transform:scaleX(0.9828);-webkit-text-stroke:0.4px #e2e2e2;">Density</span>
<span id="t42" style="position:absolute;top:92.30px;left:313.00px;transform-origin:0 50%;font:400 18px/1 'Liberation Sans', sans-serif;color:#e2e2e2;white-space:pre;transform:scaleX(0.9821);-webkit-text-stroke:0.4px #e2e2e2;">Ref: 0.00 dBm</span>
<span id="t43" style="position:absolute;top:92.30px;left:456.00px;transform-origin:0 50%;font:400 18px/1 'Liberation Sans', sans-serif;color:#e2e2e2;white-space:pre;transform:scaleX(0.9931);-webkit-text-stroke:0.4px #e2e2e2;">Scale/Div: 10.00 dB</span>
<span id="t44" style="position:absolute;top:412.90px;left:272.50px;transform-origin:0 50%;font:400 17.5px/1 'Liberation Sans', sans-serif;color:#e2e2e2;white-space:pre;transform:scaleX(0.9399);">Center Freq : 4.960000000 GHz</span>
<span id="t45" style="position:absolute;top:438.51px;left:272.50px;transform-origin:0 50%;font:400 17.5px/1 'Liberation Sans', sans-serif;color:#e2e2e2;white-space:pre;transform:scaleX(0.9306);">RBW : 502.289 kHz</span>
<span id="t46" style="position:absolute;top:412.90px;right:537.50px;transform-origin:100% 50%;font:400 17.5px/1 'Liberation Sans', sans-serif;color:#e2e2e2;white-space:pre;transform:scaleX(0.9536);">Span : 200.000000 MHz</span>
<span id="t47" style="position:absolute;top:438.51px;right:537.50px;transform-origin:100% 50%;font:400 17.5px/1 'Liberation Sans', sans-serif;color:#e2e2e2;white-space:pre;transform:scaleX(0.9654);">Acq Time : 32.00 ms</span>
<span id="t48" style="position:absolute;top:438.51px;right:691.50px;transform-origin:100% 50%;font:400 17.5px/1 'Liberation Sans', sans-serif;color:#e02818;white-space:pre;transform:scaleX(0.9300);">#</span>
<span id="t49" style="position:absolute;top:120.70px;right:543.40px;transform-origin:100% 50%;font:400 15px/1 'Liberation Sans', sans-serif;color:#e2e2e2;white-space:pre;transform:scaleX(1.0615);-webkit-text-stroke:0.3px #e2e2e2;">0.00</span>
<span id="t50" style="position:absolute;top:142.41px;right:543.40px;transform-origin:100% 50%;font:400 15px/1 'Liberation Sans', sans-serif;color:#e2e2e2;white-space:pre;transform:scaleX(0.9754);-webkit-text-stroke:0.3px #e2e2e2;">-10.00</span>
<span id="t51" style="position:absolute;top:170.41px;right:543.40px;transform-origin:100% 50%;font:400 15px/1 'Liberation Sans', sans-serif;color:#e2e2e2;white-space:pre;transform:scaleX(0.9754);-webkit-text-stroke:0.3px #e2e2e2;">-20.00</span>
<span id="t52" style="position:absolute;top:198.20px;right:543.40px;transform-origin:100% 50%;font:400 15px/1 'Liberation Sans', sans-serif;color:#e2e2e2;white-space:pre;transform:scaleX(0.9754);-webkit-text-stroke:0.3px #e2e2e2;">-30.00</span>
<span id="t53" style="position:absolute;top:226.00px;right:543.40px;transform-origin:100% 50%;font:400 15px/1 'Liberation Sans', sans-serif;color:#e2e2e2;white-space:pre;transform:scaleX(0.9754);-webkit-text-stroke:0.3px #e2e2e2;">-40.00</span>
<span id="t54" style="position:absolute;top:253.61px;right:543.40px;transform-origin:100% 50%;font:400 15px/1 'Liberation Sans', sans-serif;color:#e2e2e2;white-space:pre;transform:scaleX(0.9754);-webkit-text-stroke:0.3px #e2e2e2;">-50.00</span>
<span id="t55" style="position:absolute;top:281.20px;right:543.40px;transform-origin:100% 50%;font:400 15px/1 'Liberation Sans', sans-serif;color:#e2e2e2;white-space:pre;transform:scaleX(0.9754);-webkit-text-stroke:0.3px #e2e2e2;">-60.00</span>
<span id="t56" style="position:absolute;top:308.81px;right:543.40px;transform-origin:100% 50%;font:400 15px/1 'Liberation Sans', sans-serif;color:#e2e2e2;white-space:pre;transform:scaleX(0.9754);-webkit-text-stroke:0.3px #e2e2e2;">-70.00</span>
<span id="t57" style="position:absolute;top:336.41px;right:543.40px;transform-origin:100% 50%;font:400 15px/1 'Liberation Sans', sans-serif;color:#e2e2e2;white-space:pre;transform:scaleX(0.9754);-webkit-text-stroke:0.3px #e2e2e2;">-80.00</span>
<span id="t58" style="position:absolute;top:364.00px;right:543.40px;transform-origin:100% 50%;font:400 15px/1 'Liberation Sans', sans-serif;color:#e2e2e2;white-space:pre;transform:scaleX(0.9754);-webkit-text-stroke:0.3px #e2e2e2;">-90.00</span>
<span id="t59" style="position:absolute;top:383.91px;right:543.40px;transform-origin:100% 50%;font:400 15px/1 'Liberation Sans', sans-serif;color:#e2e2e2;white-space:pre;transform:scaleX(0.9754);-webkit-text-stroke:0.3px #e2e2e2;">-100.0</span>
<span id="t60" style="position:absolute;top:478.60px;left:217.00px;transform-origin:0 50%;font:400 18px/1 'Liberation Sans', sans-serif;color:#e2e2e2;white-space:pre;transform:scaleX(1.0233);-webkit-text-stroke:0.4px #e2e2e2;">Waterfall</span>
<span id="t61" style="position:absolute;top:480.60px;left:325.50px;transform-origin:0 50%;font:400 18px/1 'Liberation Sans', sans-serif;color:#e2e2e2;white-space:pre;transform:scaleX(0.9821);-webkit-text-stroke:0.4px #e2e2e2;">Ref: 0.00 dBm</span>
<span id="t62" style="position:absolute;top:480.60px;left:468.50px;transform-origin:0 50%;font:400 18px/1 'Liberation Sans', sans-serif;color:#e2e2e2;white-space:pre;transform:scaleX(0.9931);-webkit-text-stroke:0.4px #e2e2e2;">Scale/Div: 10.00 dB</span>
<span id="t63" style="position:absolute;top:510.01px;left:223.00px;transform-origin:0 50%;font:400 17px/1 'Liberation Sans', sans-serif;color:#e2e2e2;white-space:pre;transform:scaleX(1.0512);">Total:258217;Cur Trace:1;Time:  8.26294 ks</span>
<span id="t64" style="position:absolute;top:97.81px;left:1512.00px;transform-origin:0 50%;font:400 20px/1 'Liberation Sans', sans-serif;color:#e2e2e2;white-space:pre;transform:scaleX(1.0138);">Sweep</span>
<span id="t65" style="position:absolute;top:160.51px;left:1619.20px;transform-origin:0 50%;font:700 17.5px/1 'Liberation Sans', sans-serif;color:#e2e2e2;white-space:pre;transform:scaleX(0.9509);">Setting</span>
<span id="t66" style="position:absolute;top:158.51px;left:1410.30px;transform-origin:0 50%;font:700 19px/1 'Liberation Sans', sans-serif;color:#e2e2e2;white-space:pre;transform:scaleX(0.9978);">Acq Time</span>
<span id="t67" style="position:absolute;top:193.01px;left:1412.20px;transform-origin:0 50%;font:400 19px/1 'Liberation Sans', sans-serif;color:#e2e2e2;white-space:pre;transform:scaleX(1.0048);">32 ms</span>
<span id="t68" style="position:absolute;top:240.31px;left:1410.30px;transform-origin:0 50%;font:700 19px/1 'Liberation Sans', sans-serif;color:#e2e2e2;white-space:pre;transform:scaleX(1.0079);">Acq Mode</span>
<span id="t69" style="position:absolute;top:280.81px;left:1418.00px;transform-origin:0 50%;font:400 14.5px/1 'Liberation Sans', sans-serif;color:#0c6a4c;white-space:pre;transform:scaleX(1.0344);">Manual</span>
<span id="t70" style="position:absolute;top:280.81px;left:1492.20px;transform-origin:0 50%;font:400 14.5px/1 'Liberation Sans', sans-serif;color:#666a66;white-space:pre;transform:scaleX(1.0052);">Auto</span>
<span id="t71" style="position:absolute;top:332.51px;left:1410.50px;transform-origin:0 50%;font:700 19px/1 'Liberation Sans', sans-serif;color:#e2e2e2;white-space:pre;transform:scaleX(1.0080);">Sweep Mode</span>
<span id="t72" style="position:absolute;top:372.81px;left:1421.70px;transform-origin:0 50%;font:400 14.5px/1 'Liberation Sans', sans-serif;color:#666a66;white-space:pre;transform:scaleX(1.0022);">Single</span>
<span id="t73" style="position:absolute;top:372.81px;left:1491.70px;transform-origin:0 50%;font:400 14.5px/1 'Liberation Sans', sans-serif;color:#0c6a4c;white-space:pre;transform:scaleX(0.9987);">Cont</span>
<span id="t74" style="position:absolute;top:434.90px;left:1411.40px;transform-origin:0 50%;font:700 19px/1 'Liberation Sans', sans-serif;color:#e2e2e2;white-space:pre;transform:scaleX(0.9865);">Restart</span>
<span id="t75" style="position:absolute;top:868.40px;left:327.20px;transform-origin:0 50%;font:400 17.5px/1 'Liberation Sans', sans-serif;color:#e2e2e2;white-space:pre;transform:scaleX(0.9319);">RTSA</span>
<span id="t76" style="position:absolute;top:894.90px;left:348.30px;transform-origin:0 50%;font:400 21px/1 'Liberation Sans', sans-serif;color:#e2e2e2;white-space:pre;transform:scaleX(0.8863);">RTSA 1</span>
<span id="t77" style="position:absolute;top:901.31px;left:1454.50px;transform-origin:0 50%;font:400 19px/1 'Liberation Sans', sans-serif;color:#e2e2e2;white-space:pre;transform:scaleX(1.0004);">2025-09-13 16:48:42</span>
<span id="t78" style="position:absolute;top:14.51px;left:219.60px;transform-origin:0 50%;font:700 47.6px/1 'DejaVu Serif', 'Liberation Serif', serif;color:#ffd900;white-space:pre;transform:scaleX(0.9376);letter-spacing:-2.5px;-webkit-text-stroke:1.2px #ffd900;">RIGOL</span>
</div>
</body></html>
